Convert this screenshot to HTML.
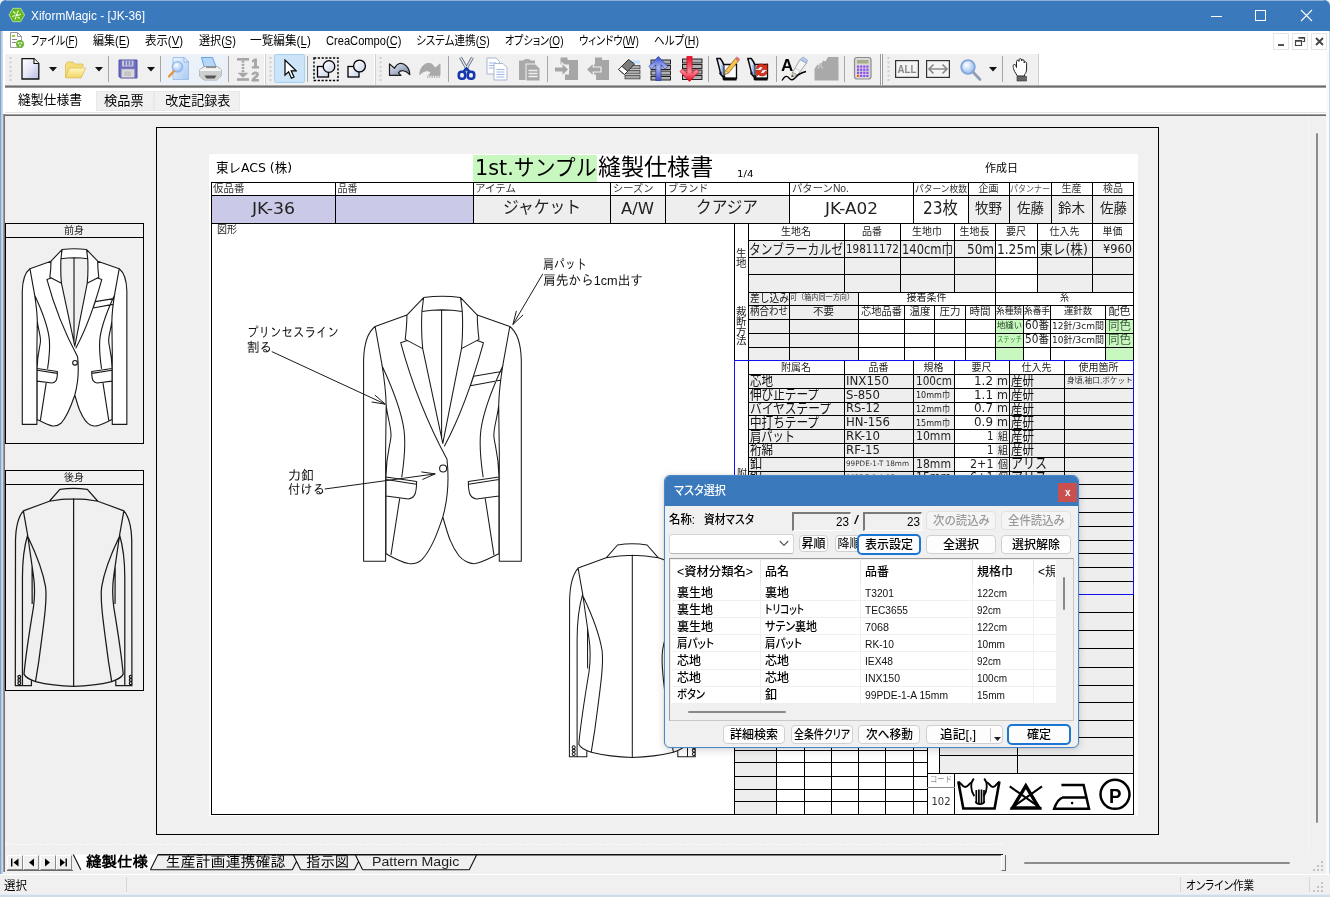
<!DOCTYPE html>
<html lang="ja"><head><meta charset="utf-8"><title>XiformMagic - [JK-36]</title>
<style>

html,body{margin:0;padding:0;}
body{width:1330px;height:897px;overflow:hidden;background:#fff;font-family:"Liberation Sans","Noto Sans CJK JP",sans-serif;font-size:12px;color:#000;}
#root{will-change:transform;position:relative;width:1330px;height:897px;overflow:hidden;background:#f0f0f0;}
#root div,#root span.t,#root svg{position:absolute;box-sizing:border-box;}
span.t{white-space:nowrap;transform-origin:0 50%;}
.btn{background:#fdfdfd;border:1px solid #d0d0d0;border-radius:4px;}
.btnf{background:#fdfdfd;border:2px solid #1a76d2;border-radius:5px;}
.btnd{background:#f5f5f5;border:1px solid #e2e2e2;border-radius:4px;}

</style></head><body>
<div id="root">
<div style="left:0;top:0;width:1330px;height:31px;background:#3a79bb;border-radius:6px 6px 0 0"></div>
<div style="left:6px;top:0px;width:1318px;height:1px;background:#8db1dc"></div>
<svg style="left:8px;top:7px" width="18" height="16" viewBox="8 7 18 16">
<polygon points="9,15 12.900,8.300 20.700,8.300 24.600,15 20.700,21.700 12.900,21.700" fill="#63b81e" stroke="#d8efc0" stroke-width="0.700"/>
<g stroke="#e6f5c8" stroke-width="1.300" fill="none"><path d="M13 11.500l2.500 2M18.500 10.500l-1.500 3M21 14l-3 1.500M20 18.500l-2.500-1.500M15 19.500l1-3M12 16.500l3-1"/></g>
<circle cx="16.800" cy="15" r="1.300" fill="#f2f9d8"/></svg>
<span id="t0" class="t" style="top:8.30px;font-size:12px;line-height:16px;color:#fff;left:31.00px;transform:scaleX(0.9882);">XiformMagic - [JK-36]</span>
<div style="left:1211px;top:16px;width:11px;height:1px;background:#fff"></div>
<div style="left:1255px;top:10px;width:11px;height:11px;border:1px solid #fff;"></div>
<svg style="left:1300px;top:9px" width="13" height="13" viewBox="0 0 13 13"><path d="M1 1L12 12M12 1L1 12" stroke="#fff" stroke-width="1.1" fill="none"/></svg>
<div style="left:0px;top:31px;width:1330px;height:21px;background:#fff;"></div>
<svg style="left:9px;top:31px" width="16" height="18" viewBox="0 0 16 18">
<path d="M1.5 1.5h7l4 4v11h-11z" fill="#fff" stroke="#9a9a9a" stroke-width="1"/><path d="M8.5 1.5v4h4" fill="none" stroke="#9a9a9a"/>
<rect x="3" y="4" width="3" height="2" fill="#9c3"/><rect x="3" y="8" width="5" height="1" fill="#888"/><rect x="3" y="11" width="4" height="1" fill="#888"/>
<circle cx="11" cy="13" r="4" fill="#6fb43c"/><circle cx="9.6" cy="12" r="1" fill="#dff0c8"/><circle cx="12.4" cy="12" r="1" fill="#dff0c8"/><circle cx="11" cy="14.6" r="1" fill="#dff0c8"/></svg>
<span id="t1" class="t" style="top:32.80px;font-size:12px;line-height:16px;font-feature-settings:'palt';left:31.30px;transform:scaleX(0.8226);">ファイル(F)</span>
<span id="t2" class="t" style="top:32.80px;font-size:12px;line-height:16px;font-feature-settings:'palt';left:93.40px;transform:scaleX(0.9200);">編集(E)</span>
<span id="t3" class="t" style="top:32.80px;font-size:12px;line-height:16px;font-feature-settings:'palt';left:145.20px;transform:scaleX(0.9525);">表示(V)</span>
<span id="t4" class="t" style="top:32.80px;font-size:12px;line-height:16px;font-feature-settings:'palt';left:198.50px;transform:scaleX(0.9225);">選択(S)</span>
<span id="t5" class="t" style="top:32.80px;font-size:12px;line-height:16px;font-feature-settings:'palt';left:250.40px;transform:scaleX(0.9701);">一覧編集(L)</span>
<span id="t6" class="t" style="top:32.80px;font-size:12px;line-height:16px;font-feature-settings:'palt';left:326.00px;transform:scaleX(0.9268);">CreaCompo(C)</span>
<span id="t7" class="t" style="top:32.80px;font-size:12px;line-height:16px;font-feature-settings:'palt';left:416.40px;transform:scaleX(0.8819);">システム連携(S)</span>
<span id="t8" class="t" style="top:32.80px;font-size:12px;line-height:16px;font-feature-settings:'palt';left:505.30px;transform:scaleX(0.8346);">オプション(O)</span>
<span id="t9" class="t" style="top:32.80px;font-size:12px;line-height:16px;font-feature-settings:'palt';left:579.10px;transform:scaleX(0.8512);">ウィンドウ(W)</span>
<span id="t10" class="t" style="top:32.80px;font-size:12px;line-height:16px;font-feature-settings:'palt';left:654.20px;transform:scaleX(0.8807);">ヘルプ(H)</span>
<div style="left:68px;top:47px;width:6px;height:1px;background:#000"></div>
<div style="left:120px;top:47px;width:6px;height:1px;background:#000"></div>
<div style="left:172px;top:47px;width:7px;height:1px;background:#000"></div>
<div style="left:224px;top:47px;width:7px;height:1px;background:#000"></div>
<div style="left:301px;top:47px;width:5px;height:1px;background:#000"></div>
<div style="left:389px;top:47px;width:7px;height:1px;background:#000"></div>
<div style="left:478px;top:47px;width:7px;height:1px;background:#000"></div>
<div style="left:550px;top:47px;width:9px;height:1px;background:#000"></div>
<div style="left:624px;top:47px;width:10px;height:1px;background:#000"></div>
<div style="left:686px;top:47px;width:8px;height:1px;background:#000"></div>
<div style="left:1273px;top:33px;width:16px;height:17px;background:#fff;border:1px solid #e5e5e5;"></div>
<div style="left:1292px;top:33px;width:16px;height:17px;background:#fff;border:1px solid #e5e5e5;"></div>
<div style="left:1311px;top:33px;width:16px;height:17px;background:#fff;border:1px solid #e5e5e5;"></div>
<div style="left:1278px;top:44px;width:6px;height:2px;background:#555"></div>
<svg style="left:1294px;top:36px" width="12" height="11" viewBox="0 0 12 11"><path d="M4.5 1.5h6v4h-2M1.5 4.5h6v5h-6z" fill="none" stroke="#444" stroke-width="1.2"/><path d="M1.5 5h6M4.5 2h6" stroke="#444" stroke-width="1.6"/></svg>
<svg style="left:1315px;top:37px" width="9" height="9" viewBox="0 0 9 9"><path d="M1 1L8 8M8 1L1 8" stroke="#444" stroke-width="1.8" fill="none"/></svg>
<div style="left:0px;top:52px;width:1330px;height:36px;background:#fff;"></div>
<div style="left:5px;top:54px;width:1034px;height:31px;background:#f0f0f0;"></div>
<div style="left:1038px;top:54px;width:1px;height:31px;background:#d0d0d0"></div>
<div style="left:5px;top:85px;width:1321px;height:1px;background:#a8a8a8"></div>
<div style="left:5px;top:86px;width:1321px;height:1px;background:#6e6e6e"></div>
<div style="left:5px;top:87px;width:1321px;height:1px;background:#9a9a9a"></div>
<div style="left:0px;top:88px;width:1330px;height:26px;background:#fff;"></div>
<div style="left:96px;top:91px;width:58px;height:20px;background:#f0f0f0;border:1px solid #e8e8e8;"></div>
<div style="left:154px;top:91px;width:86px;height:20px;background:#f0f0f0;border:1px solid #e8e8e8;"></div>
<span id="t11" class="t" style="top:91.00px;font-size:13px;line-height:17px;left:18.00px;transform:scaleX(0.9844);">縫製仕様書</span>
<span id="t12" class="t" style="top:92.00px;font-size:13px;line-height:17px;left:104.40px;transform:scaleX(1.0150);">検品票</span>
<span id="t13" class="t" style="top:92.00px;font-size:13px;line-height:17px;left:165.20px;">改定記録表</span>
<div style="left:5px;top:112px;width:1321px;height:1px;background:#e3e3e3"></div>
<div style="left:5px;top:114px;width:1321px;height:1px;background:#a0a0a0"></div>
<div style="left:5px;top:115px;width:1321px;height:1px;background:#696969"></div>
<div style="left:0px;top:31px;width:1px;height:866px;background:#7fa6d3"></div>
<div style="left:1px;top:31px;width:1px;height:866px;background:#b7cde6"></div>
<div style="left:3px;top:114px;width:1px;height:758px;background:#9a9a9a"></div>
<div style="left:4px;top:114px;width:1px;height:758px;background:#767676"></div>
<div style="left:2px;top:31px;width:1px;height:866px;background:#c9d8ea"></div>
<div style="left:1326px;top:52px;width:3px;height:823px;background:#fafafa"></div>
<div style="left:1329px;top:31px;width:1px;height:866px;background:#c9d8ea"></div>
<div style="left:0px;top:875px;width:1330px;height:22px;background:#f0f0f0;"></div>
<div style="left:0px;top:874px;width:1330px;height:1px;background:#fff"></div>
<div style="left:0px;top:894px;width:1330px;height:1px;background:#e4ebf4"></div>
<div style="left:0px;top:895px;width:1330px;height:2px;background:#cfdcec"></div>
<span id="t14" class="t" style="top:877.80px;font-size:12px;line-height:16px;left:4.00px;transform:scaleX(0.9577);">選択</span>
<div style="left:126px;top:877px;width:1px;height:15px;background:#d7d7d7"></div>
<div style="left:1180px;top:877px;width:1px;height:15px;background:#d7d7d7"></div>
<div style="left:1309px;top:877px;width:1px;height:15px;background:#d7d7d7"></div>
<span id="t15" class="t" style="top:877.80px;font-size:12px;line-height:16px;font-feature-settings:'palt';left:1186.00px;transform:scaleX(0.8794);">オンライン作業</span>
<svg width="0" height="0" style="left:0;top:0"><defs>
<linearGradient id="gLav" x1="0" y1="0" x2="1" y2="1"><stop offset="0" stop-color="#ffffff"/><stop offset="0.5" stop-color="#e6e6f7"/><stop offset="1" stop-color="#b9b9e0"/></linearGradient>
<linearGradient id="gFol" x1="0" y1="0" x2="0" y2="1"><stop offset="0" stop-color="#fff8c4"/><stop offset="1" stop-color="#f2d462"/></linearGradient>
<radialGradient id="gLens" cx="0.4" cy="0.35" r="0.7"><stop offset="0" stop-color="#ffffff"/><stop offset="1" stop-color="#8fb8ee"/></radialGradient>
<linearGradient id="gUp" x1="0" y1="0" x2="0" y2="1"><stop offset="0" stop-color="#3048d0"/><stop offset="0.450" stop-color="#a8b4f0"/><stop offset="1" stop-color="#4a50c8"/></linearGradient>
<linearGradient id="gDn" x1="0" y1="0" x2="0" y2="1"><stop offset="0" stop-color="#f00828"/><stop offset="0.600" stop-color="#f88a98"/><stop offset="1" stop-color="#e80018"/></linearGradient>
<linearGradient id="gBall" x1="0" y1="0" x2="1" y2="1"><stop offset="0" stop-color="#ffffff"/><stop offset="1" stop-color="#c9d3ea"/></linearGradient>
</defs></svg>
<svg style="left:9px;top:56px" width="3" height="28" viewBox="0 0 3 28"><g fill="#cdcdcd"><rect x="0.5" y="1.0" width="2" height="2"/><rect x="0.5" y="5.4" width="2" height="2"/><rect x="0.5" y="9.8" width="2" height="2"/><rect x="0.5" y="14.2" width="2" height="2"/><rect x="0.5" y="18.6" width="2" height="2"/><rect x="0.5" y="23.0" width="2" height="2"/></g></svg>
<svg style="left:21px;top:57px" width="19" height="24" viewBox="0 0 19 24"><path d="M1 1.700h12l4.800 4.800v15.500H1z" fill="url(#gLav)" stroke="#111" stroke-width="1.300"/><path d="M13 1.700v4.800h4.800" fill="#fff" stroke="#111" stroke-width="1.100"/></svg>
<svg style="left:48.5px;top:67px" width="8" height="5" viewBox="0 0 8 5"><path d="M0 0h8l-4 4.5z" fill="#111"/></svg>
<svg style="left:64px;top:60px" width="23" height="20" viewBox="0 0 23 20"><path d="M1.5 17.5V4.5l2-2.5h5.5l1.5 2h8.5v3" fill="#f6dc78" stroke="#dcbc52" stroke-width="0.8"/><path d="M1.5 17.8l3.8-9.8h16.2l-4.3 9.8z" fill="url(#gFol)" stroke="#dcbc52" stroke-width="0.8"/></svg>
<svg style="left:94.5px;top:67px" width="8" height="5" viewBox="0 0 8 5"><path d="M0 0h8l-4 4.5z" fill="#111"/></svg>
<div style="left:108px;top:56px;width:1px;height:26px;background:#a6a6a6"></div>
<svg style="left:118px;top:59px" width="20" height="20" viewBox="0 0 20 20"><path d="M1 1h18v18H2.5L1 17.5z" fill="#6c6cc4" stroke="#5050a8" stroke-width="1"/><rect x="4" y="1.5" width="11.5" height="6" fill="#c9c9d6"/><rect x="6.2" y="1.5" width="1.4" height="5" fill="#6c6cc4"/><rect x="9.2" y="1.5" width="1.4" height="5" fill="#6c6cc4"/><rect x="12.2" y="1.5" width="1.4" height="5" fill="#6c6cc4"/><rect x="3.5" y="10" width="13" height="8.5" fill="#d9d9d9" stroke="#9a9ab0" stroke-width="0.6"/><rect x="6" y="12.5" width="7" height="4.5" fill="#c4c4c4"/></svg>
<svg style="left:146.5px;top:67px" width="8" height="5" viewBox="0 0 8 5"><path d="M0 0h8l-4 4.5z" fill="#111"/></svg>
<div style="left:160px;top:56px;width:1px;height:26px;background:#a6a6a6"></div>
<div style="left:163px;top:55px;width:63px;height:29px;background:#eaf1f9;"></div>
<svg style="left:166px;top:56px" width="24" height="25" viewBox="0 0 24 25"><defs><linearGradient id="gPg" x1="0" y1="0" x2="1" y2="1"><stop offset="0" stop-color="#eef5fe"/><stop offset="1" stop-color="#a9c9f2"/></linearGradient></defs><path d="M7 1.500h11l4.500 4.500v17.500H7z" fill="url(#gPg)" stroke="#9dbde8" stroke-width="0.900"/><path d="M18 1.500V6h4.500z" fill="#f4f9ff" stroke="#7fa6de" stroke-width="0.800"/><circle cx="11.500" cy="10.800" r="5.200" fill="url(#gLens)" stroke="#8db6ea" stroke-width="1.300"/><path d="M7.800 15.200L3 20.500" stroke="#e8923e" stroke-width="2.300" stroke-linecap="round"/></svg>
<svg style="left:198px;top:56px" width="25" height="26" viewBox="0 0 25 26"><path d="M6.500 12L3.500 1.500h11L18.500 12z" fill="#b4d6f8" stroke="#5a9ade" stroke-width="0.900"/><path d="M1.500 14l4.500-3.500h13.500l4 3.500v5.500l-5 4.500H6l-4.500-4z" fill="#ededed" stroke="#9a9a9a" stroke-width="0.800"/><path d="M1.500 14.500h22v4l-5 5H6l-4.500-4.500z" fill="#cfcfcf"/><path d="M2 14.200h21" stroke="#fdfdfd" stroke-width="1.200"/><path d="M6.500 19.500h12l-2 3H8.500z" fill="#555"/><path d="M8 11.200h10" stroke="#777" stroke-width="1.200"/></svg>
<div style="left:228px;top:56px;width:1px;height:26px;background:#a6a6a6"></div>
<svg style="left:236px;top:57px" width="24" height="25" viewBox="0 0 24 25"><g fill="#a6a6a6"><rect x="1" y="1" width="12" height="2.600"/><rect x="5.700" y="3.600" width="2.600" height="2"/><rect x="5.700" y="6.800" width="2.600" height="2"/><rect x="5.700" y="10" width="2.600" height="2"/><rect x="5.700" y="13.200" width="2.600" height="2"/><path d="M1.500 15.800h11l-5.500 5z"/><rect x="1" y="21.200" width="12" height="2.600"/></g><text x="15.500" y="10.500" style="font:bold 13.500px 'Liberation Sans',sans-serif" fill="#a6a6a6" stroke="#a6a6a6" stroke-width="0.900">1</text><text x="15.500" y="23.800" style="font:bold 13.500px 'Liberation Sans',sans-serif" fill="#a6a6a6" stroke="#a6a6a6" stroke-width="0.900">2</text></svg>
<div style="left:264px;top:54px;width:1px;height:31px;background:#fff"></div>
<div style="left:265px;top:54px;width:1px;height:31px;background:#cfcfcf"></div>
<svg style="left:269px;top:56px" width="3" height="28" viewBox="0 0 3 28"><g fill="#cdcdcd"><rect x="0.5" y="1.0" width="2" height="2"/><rect x="0.5" y="5.4" width="2" height="2"/><rect x="0.5" y="9.8" width="2" height="2"/><rect x="0.5" y="14.2" width="2" height="2"/><rect x="0.5" y="18.6" width="2" height="2"/><rect x="0.5" y="23.0" width="2" height="2"/></g></svg>
<div style="left:274px;top:54px;width:31px;height:29px;background:#cce4f7;border:1px solid #a6d2f5;border-radius:2px;"></div>
<svg style="left:284px;top:59px" width="13" height="21" viewBox="0 0 13 21"><path d="M1 1v15.2l3.6-3.4 2.8 6.4 2.6-1.2-2.8-6.2h5z" fill="#fff" stroke="#000" stroke-width="1.2" stroke-linejoin="miter"/></svg>
<div style="left:307px;top:56px;width:1px;height:26px;background:#a6a6a6"></div>
<svg style="left:313px;top:57px" width="26" height="25" viewBox="0 0 26 25"><rect x="1" y="1" width="24" height="22.5" fill="none" stroke="#000" stroke-width="1.4" stroke-dasharray="2.2 1.6"/><rect x="4.5" y="9.5" width="11" height="10.5" fill="url(#gBall)" stroke="#000" stroke-width="1.3"/><circle cx="16" cy="9.5" r="5.8" fill="url(#gBall)" stroke="#000" stroke-width="1.3"/></svg>
<svg style="left:347px;top:59px" width="20" height="20" viewBox="0 0 20 20"><rect x="1" y="7.5" width="11" height="10.5" fill="url(#gBall)" stroke="#000" stroke-width="1.3"/><circle cx="12.5" cy="7" r="5.9" fill="url(#gBall)" stroke="#000" stroke-width="1.3"/></svg>
<div style="left:374px;top:54px;width:1px;height:31px;background:#fff"></div>
<div style="left:375px;top:54px;width:1px;height:31px;background:#cfcfcf"></div>
<svg style="left:379px;top:56px" width="3" height="28" viewBox="0 0 3 28"><g fill="#cdcdcd"><rect x="0.5" y="1.0" width="2" height="2"/><rect x="0.5" y="5.4" width="2" height="2"/><rect x="0.5" y="9.8" width="2" height="2"/><rect x="0.5" y="14.2" width="2" height="2"/><rect x="0.5" y="18.6" width="2" height="2"/><rect x="0.5" y="23.0" width="2" height="2"/></g></svg>
<svg style="left:388px;top:61px" width="23" height="17" viewBox="0 0 23 17"><defs><linearGradient id="gUn" x1="0" y1="0" x2="1" y2="1"><stop offset="0" stop-color="#e8eef8"/><stop offset="1" stop-color="#6f7f9c"/></linearGradient></defs><path d="M1.500 2.900V14.300H13L10.500 11.800C12.500 9 16.500 8.500 21.800 13.500C21.500 6 16 1.500 11.500 2.500C9.500 3 8 4.200 6.500 7.300z" fill="url(#gUn)" stroke="#1a1a1a" stroke-width="1.200" stroke-linejoin="round"/></svg>
<svg style="left:418px;top:61px" width="24" height="17" viewBox="0 0 24 17"><path d="M22 2.900V14.300H10.500L13 11.800C11 9 7 8.500 1.700 13.500C2 6 7.500 1.500 12 2.500C14 3 15.500 4.200 17 7.300z" fill="#a9a9a9" stroke="#a9a9a9" stroke-width="1" stroke-linejoin="round"/><path d="M9 16h13" stroke="#a9a9a9" stroke-width="1.400" stroke-dasharray="1.300 1"/></svg>
<div style="left:448px;top:56px;width:1px;height:26px;background:#a6a6a6"></div>
<svg style="left:457px;top:56px" width="19" height="25" viewBox="0 0 19 25"><path d="M3.500 1.500L11.200 15M15.500 1.500L7.800 15" stroke="#5d6676" stroke-width="3" fill="none"/><path d="M3.500 1.500L10.500 13.800M15.500 1.500L8.500 13.800" stroke="#dfe5ef" stroke-width="1.500" fill="none"/><rect x="1.800" y="15.800" width="6.400" height="7" rx="2.800" fill="none" stroke="#1437b0" stroke-width="2.600"/><rect x="10.800" y="15.800" width="6.400" height="7" rx="2.800" fill="none" stroke="#1437b0" stroke-width="2.600"/><path d="M6.500 15.500l3-3 3 3" stroke="#1437b0" stroke-width="2.400" fill="none"/></svg>
<svg style="left:486px;top:57px" width="23" height="24" viewBox="0 0 23 24"><path d="M1 1h9l3.500 3.500V17H1z" fill="#fff" stroke="#a9b7d1" stroke-width="1"/><g stroke="#9bb6ea" stroke-width="1.100"><path d="M3 6h7M3 8.500h8M3 11h8"/></g><path d="M8 6.500h9l4 4V23H8z" fill="#fff" stroke="#a9b7d1" stroke-width="1"/><g stroke="#9bb6ea" stroke-width="1.200"><path d="M10.500 12.500h8M10.500 15h8M10.500 17.500h8M10.500 20h8"/></g></svg>
<svg style="left:518px;top:57px" width="23" height="24" viewBox="0 0 23 24"><path d="M1 3.500h4.500c0-2 7-2 7 0H17v3h-9.500V23H1z" fill="#a9a9a9"/><path d="M8.500 7.500h9l4 4V23.500h-13z" fill="#a9a9a9"/><g stroke="#f0f0f0" stroke-width="1.400"><path d="M10.500 13.500h9M10.500 16.500h9M10.500 19.500h9"/></g></svg>
<div style="left:547px;top:56px;width:1px;height:26px;background:#a6a6a6"></div>
<svg style="left:554px;top:57px" width="24" height="23" viewBox="0 0 24 23"><path d="M6.500 0.500h7v2.500h10.500v20H11v-5.500h4v-10h-8.500z" fill="#a6a6a6"/><path d="M0.300 10h7.700V5.800l7 6.700-7 6.700V15H0.300z" fill="#a6a6a6" stroke="#f0f0f0" stroke-width="1.200"/></svg>
<svg style="left:585px;top:57px" width="24" height="23" viewBox="0 0 24 23"><path d="M10 0.500h7v2.500h7v20H11v-5.500h-2.500v-10h1.500z" fill="#a6a6a6"/><path d="M16 10H8.300V5.800L1 12.500l7.300 6.700V15H16z" fill="#a6a6a6" stroke="#f0f0f0" stroke-width="1.200"/></svg>
<svg style="left:617px;top:58px" width="24" height="23" viewBox="0 0 24 23"><g fill="#a8a8a8" stroke="#333" stroke-width="0.700"><rect x="8" y="7.500" width="15" height="3.400"/><rect x="8" y="12.500" width="15" height="3.400"/><rect x="8" y="17.500" width="15" height="3.400"/></g><rect x="12" y="2.500" width="11" height="3" fill="#bfe0fb"/><path d="M1.500 11.500L11.500 1.500l6 4.500-10 10.500z" fill="#7c7c7c" stroke="#222" stroke-width="0.900"/><path d="M1.500 11.500l3.200-3.200 6 5-3.200 3.200z" fill="#fff" stroke="#222" stroke-width="0.900"/></svg>
<svg style="left:648px;top:56px" width="24" height="25" viewBox="0 0 24 25"><g fill="#b0b0b0" stroke="#111" stroke-width="0.900"><rect x="3" y="4" width="19.500" height="4"/><rect x="3" y="9.500" width="19.500" height="4"/><rect x="3" y="15" width="19.500" height="4"/><rect x="3" y="20.500" width="19.500" height="3.500"/></g><path transform="translate(-1.600 0)" d="M12 0.500L21.500 10.500L18.800 13L14.600 8.800V24.500H9.400V8.800L5.200 13L2.500 10.500z" fill="url(#gUp)" stroke="#2b3fb8" stroke-width="0.700"/></svg>
<svg style="left:679px;top:56px" width="24" height="26" viewBox="0 0 24 26"><g fill="#b0b0b0" stroke="#111" stroke-width="0.900"><rect x="3.500" y="3" width="19.500" height="4"/><rect x="3.500" y="8.500" width="19.500" height="4"/><rect x="3.500" y="14" width="19.500" height="4"/><rect x="3.500" y="19.500" width="19.500" height="4"/></g><path transform="translate(-2 0)" d="M12.500 25.500L3 15.500L5.700 13L9.900 17.200V0.500H15.100V17.200L19.300 13L22 15.500z" fill="url(#gDn)" stroke="#d40018" stroke-width="0.700"/></svg>
<div style="left:708px;top:56px;width:1px;height:26px;background:#a6a6a6"></div>
<svg style="left:715px;top:56px" width="25" height="25" viewBox="0 0 25 25"><path d="M1.800 2.500h3.500c1.500 2 3 4 3.500 6.500v11l-3.500-3.500C4.500 12 3 7 1.800 2.500z" fill="#dbe6f8" stroke="#0a0a0a" stroke-width="1.500" stroke-linejoin="round"/><path d="M8.800 8.500h12.700v14H9z" fill="#fdfdfd" stroke="#0a0a0a" stroke-width="1.300"/><path d="M5 16.500l4 4.500v2h12.500" stroke="#0a0a0a" stroke-width="2.800" fill="none" stroke-linejoin="round"/><path d="M6.500 9v9l2 2V9.500z" fill="#8fb0e8"/><path d="M10.500 14.500L20.500 2.500l3 2.300L13.500 17l-4 1.500z" fill="#f7c64a" stroke="#8a5a14" stroke-width="0.800"/><path d="M20.500 2.500l3 2.300 1.300-1.600-3-2.300z" fill="#f07a86" stroke="#b04050" stroke-width="0.500"/><path d="M10.500 14.500l-1 4 4-1.500z" fill="#f3e3c3" stroke="#8a5a14" stroke-width="0.500"/><path d="M9.500 18.500l1.200-0.500-0.800-0.800z" fill="#222"/></svg>
<svg style="left:746px;top:56px" width="24" height="25" viewBox="0 0 24 25"><path d="M1.800 2.500h3.500c1.500 2 3 4 3.500 6.500v11l-3.500-3.500C4.500 12 3 7 1.800 2.500z" fill="#dbe6f8" stroke="#0a0a0a" stroke-width="1.500" stroke-linejoin="round"/><path d="M8.800 8.500h12.700v14H9z" fill="#fdfdfd" stroke="#0a0a0a" stroke-width="1.300"/><path d="M5 16.500l4 4.500v2h12.500" stroke="#0a0a0a" stroke-width="2.800" fill="none" stroke-linejoin="round"/><path d="M6.500 9v9l2 2V9.500z" fill="#8fb0e8"/><path d="M10 12.500C10.500 8 16 6.500 19 9.500L21 7.500L21.500 14L15 13.500L17 11.500C15.500 10 13 10.500 12.500 12.500Z" fill="#e03018" stroke="#8a1404" stroke-width="0.500"/><path d="M21.500 15.500C21 20 15.500 21.500 12.500 18.500L10.500 20.500L10 14L16.500 14.500L14.500 16.500C16 18 18.500 17.500 19 15.500Z" fill="#e03018" stroke="#8a1404" stroke-width="0.500"/></svg>
<div style="left:776px;top:56px;width:1px;height:26px;background:#a6a6a6"></div>
<svg style="left:781px;top:56px" width="27" height="26" viewBox="0 0 27 26"><text x="0" y="14.500" style="font:bold 17px 'Liberation Sans',sans-serif" fill="#000">A</text><path d="M11.500 16.500L19 3.500l6.500 3.500L16.500 19z" fill="#f4f4f4" stroke="#8a8a8a" stroke-width="0.800"/><path d="M14 12l6.500 3.500" stroke="#c8c8c8" stroke-width="0.800"/><path d="M19 3.500l6.500 3.500 1-3-4.500-3z" fill="#b4cdee" stroke="#8a9ab8" stroke-width="0.600"/><path d="M11.500 16.500l-1 4.500 6-2z" fill="#e8d8c0" stroke="#777" stroke-width="0.500"/><path d="M10.500 21l0.500-2.200 1.800 1.400z" fill="#333"/><path d="M1 24.500c3-5 5-5 7-2.500s4 2.500 7-1 6-4.500 10-5.500" fill="none" stroke="#000" stroke-width="1.300"/></svg>
<svg style="left:814px;top:56px" width="25" height="25" viewBox="0 0 25 25"><path d="M0.500 24.500V13l3-4.500 2 1 4-5 2 1 2.500-4.500H24.500v23.500z" fill="#a9a9a9"/><text x="3" y="13" font-size="9" font-weight="bold" fill="#c6c6c6" font-family="Liberation Sans, sans-serif">A</text></svg>
<div style="left:844px;top:56px;width:1px;height:26px;background:#a6a6a6"></div>
<svg style="left:853px;top:56px" width="20" height="25" viewBox="0 0 20 25"><rect x="1.500" y="1.500" width="16.500" height="21.500" rx="2.500" fill="#d9d9d9" stroke="#8c8c8c" stroke-width="1.200"/><rect x="4" y="4" width="11.500" height="3.500" fill="#a9ad86"/><g fill="#8a4cf0"><rect x="4.0" y="9.5" width="2.200" height="2.200"/><rect x="4.0" y="12.6" width="2.200" height="2.200"/><rect x="4.0" y="15.7" width="2.200" height="2.200"/><rect x="7.1" y="9.5" width="2.200" height="2.200"/><rect x="7.1" y="12.6" width="2.200" height="2.200"/><rect x="7.1" y="15.7" width="2.200" height="2.200"/><rect x="7.1" y="18.8" width="2.200" height="2.200"/><rect x="10.2" y="9.5" width="2.200" height="2.200"/><rect x="10.2" y="12.6" width="2.200" height="2.200"/><rect x="10.2" y="15.7" width="2.200" height="2.200"/><rect x="10.2" y="18.8" width="2.200" height="2.200"/><rect x="13.3" y="9.5" width="2.200" height="2.200"/><rect x="13.3" y="12.6" width="2.200" height="2.200"/><rect x="13.3" y="15.7" width="2.200" height="2.200"/><rect x="13.3" y="18.8" width="2.200" height="2.200"/></g><rect x="4" y="18.800" width="2.200" height="2.200" fill="#f05a1a"/></svg>
<div style="left:880px;top:54px;width:1px;height:31px;background:#9a9a9a"></div>
<div style="left:882px;top:54px;width:1px;height:31px;background:#9a9a9a"></div>
<div style="left:881px;top:54px;width:1px;height:31px;background:#fff"></div>
<svg style="left:887px;top:56px" width="3" height="28" viewBox="0 0 3 28"><g fill="#cdcdcd"><rect x="0.5" y="1.0" width="2" height="2"/><rect x="0.5" y="5.4" width="2" height="2"/><rect x="0.5" y="9.8" width="2" height="2"/><rect x="0.5" y="14.2" width="2" height="2"/><rect x="0.5" y="18.6" width="2" height="2"/><rect x="0.5" y="23.0" width="2" height="2"/></g></svg>
<svg style="left:895px;top:60px" width="24" height="18" viewBox="0 0 24 18"><rect x="0.600" y="0.600" width="22.800" height="16.800" fill="#f4f4f4" stroke="#333" stroke-width="1.200"/><text x="12" y="13.200" text-anchor="middle" font-size="11.500" font-weight="bold" fill="#8a8a8a" font-family="Liberation Sans, sans-serif" textLength="19" lengthAdjust="spacingAndGlyphs">ALL</text></svg>
<svg style="left:926px;top:60px" width="24" height="18" viewBox="0 0 24 18"><rect x="0.600" y="0.600" width="22.800" height="16.800" fill="#f4f4f4" stroke="#333" stroke-width="1.200"/><path d="M3 9h18M7.500 4.500L3 9l4.500 4.500M16.500 4.500L21 9l-4.500 4.500" fill="none" stroke="#8a8a8a" stroke-width="1.700"/></svg>
<svg style="left:959px;top:58px" width="23" height="23" viewBox="0 0 23 23"><circle cx="9" cy="9" r="6.800" fill="url(#gLens)" stroke="#7fa3dc" stroke-width="1.800"/><path d="M14 14l7 7.500" stroke="#8f9db8" stroke-width="2.600" stroke-linecap="round"/></svg>
<svg style="left:988.5px;top:67px" width="8" height="5" viewBox="0 0 8 5"><path d="M0 0h8l-4 4.5z" fill="#111"/></svg>
<div style="left:1002px;top:56px;width:1px;height:26px;background:#a6a6a6"></div>
<svg style="left:1012px;top:57px" width="19" height="25" viewBox="0 0 19 25"><path d="M3.500 16c-2.500-4-3-8-1.500-8.500s2 1 2.500 3V4.500c0-1.800 2.500-1.800 2.500 0V3c0-1.800 2.600-1.800 2.600 0v1c0-1.800 2.600-1.800 2.600 0v2c0-1.600 2.400-1.600 2.400 0.200V12c0 3-1 4-2 5.500v1.500H5.500z" fill="#fff" stroke="#222" stroke-width="1"/><rect x="5" y="19.500" width="9.500" height="4.500" fill="#666" stroke="#333" stroke-width="0.600"/></svg>
<div style="left:5px;top:223px;width:139px;height:221px;background:#f0f0f0;border:1px solid #000;"></div>
<div style="left:5px;top:237px;width:139px;height:1px;background:#000"></div>
<span id="t16" class="t" style="top:224.00px;font-size:10px;line-height:13px;color:#222;left:64.00px;">前身</span>
<svg style="left:6px;top:237px" width="137" height="206" viewBox="6 237 137 206"><g transform="translate(-218.77 52.25) scale(0.663)"><path d="M423.6 297.6L406.9 315.1L375.1 326.5C368 332 364 345 363.6 360L363.6 561.3L385.6 561.3L386 553.8C394 558 401 562 408.5 563.6C412.5 564.2 417.5 563.5 421.9 559.6C432 549 438 531 442.8 517C446 528 449 538 450.3 540.4C453 547 456 552 458.7 555.5C463 561 470 564.2 475.4 563.6C482 562.5 488 559 498.9 553.8L499.3 561.3L521.3 561.3L521.3 360C520.9 345 516.9 332 509.8 326.5L477.3 315.1L460.4 297.6Q442 295 423.6 297.6z" fill="#fff" stroke="none"/><path d="M421.9 311.4Q441.6 308.4 461.3 311.4C461.9 325 461.4 340 460.5 348.6L442.8 443.4L422.7 348.6C421.8 340 421.3 325 421.9 311.4z" fill="#f0f0f0" stroke="none"/><g fill="none" stroke="#1a1a1a" stroke-width="1.7" stroke-linejoin="round" stroke-linecap="round"><path d="M423.6 297.6Q442 295 460.4 297.6M421.9 311.4Q442 308.4 462.3 311.4M441.6 310V438.5M423.6 297.6L421.9 311.4C421.3 325.0 421.8 340.0 422.7 348.6L442.8 443.4M423.6 297.6L406.9 315.1C406.9 325.0 406.0 333.0 405.2 339.4L422.7 348.6M407.2 340.5L400.7 342.7Q417.3 404.3 447 459.3M406.9 315.1L375.1 326.5M375.1 326.5C368.0 332.0 364.0 345.0 363.6 360.0L363.6 561.3L385.6 561.3L385.6 452.0M375.1 326.5L381.8 363.6C384.5 380.0 386.0 395.0 386.2 405.4C387.5 418.0 391.5 428.0 391.0 436.0C390.5 445.0 386.5 452.0 386.0 476.0L386.0 553.8M386.2 405.4L385.6 452.0M381.8 365.3C391.0 385.0 401.0 408.0 404.0 430.0C406.0 445.0 404.0 462.0 401.8 477.0M399.7 498.3L391.0 554.6M386.0 476.9L416.6 481.5C416.6 488.0 416.0 493.0 414.2 495.6Q412.5 498.6 408.5 498.9L386.0 496.1M386.0 479.6L416.4 484.3M460.6 297.6L462.3 311.4C462.9 325.0 462.4 340.0 461.5 348.6L442.8 443.4M460.6 297.6L477.3 315.1C477.3 325.0 478.2 333.0 479.0 339.4L461.5 348.6M477.0 340.5L483.5 342.7Q466 406.3 444.5 446M477.3 315.1L509.8 326.5M509.8 326.5C516.9 332.0 520.9 345.0 521.3 360.0L521.3 561.3L499.3 561.3L499.3 452.0M509.8 326.5L503.1 363.6C500.4 380.0 498.9 395.0 498.7 405.4C497.4 418.0 493.4 428.0 493.9 436.0C494.4 445.0 498.4 452.0 498.9 476.0L498.9 553.8M498.7 405.4L499.3 452.0M503.1 365.3C493.9 385.0 483.9 408.0 480.9 430.0C478.9 445.0 480.9 462.0 483.1 477.0M485.2 498.3L493.9 554.6M498.9 476.9L468.3 481.5C468.3 488.0 468.9 493.0 470.7 495.6Q472.4 498.6 476.4 498.9L498.9 496.1M498.9 479.6L468.5 484.3M501.6 371.6L473.7 376.2L470.4 385.7L500.2 380.3M447 459.3C449.6 484 446.2 505 442.8 517C438 531 432 549 421.9 559.6C417.5 563.5 412.5 564.2 408.5 563.6C401 562 394 558 386 553.8M442.8 517C446 528 449 538 450.3 540.4C453 547 456 552 458.7 555.5C463 561 470 564.2 475.4 563.6C482 562.5 488 559 498.9 553.8"/><circle cx="443.1" cy="468.5" r="3.500" fill="#fff"/></g></g></svg>
<div style="left:5px;top:470px;width:139px;height:221px;background:#f0f0f0;border:1px solid #000;"></div>
<div style="left:5px;top:484px;width:139px;height:1px;background:#000"></div>
<span id="t17" class="t" style="top:471.00px;font-size:10px;line-height:13px;color:#222;left:64.00px;">後身</span>
<svg style="left:6px;top:484px" width="137" height="206" viewBox="6 484 137 206"><g transform="translate(-512.53 -15.83) scale(0.927)"><g fill="none" stroke="#1a1a1a" stroke-width="1.35" stroke-linejoin="round" stroke-linecap="round"><path d="M617.5 545Q632.3 542.6 647.1 545M632.3 555V757.4M606.2 557.8Q632.3 552.6 658.4 557.8M617.5 545.0L606.2 557.8L578.1 568.1M578.1 568.1C573.0 574.0 570.0 584.0 569.6 600.0L569.4 756.7L586.8 756.7L586.8 751.5M577.1 756.7L577.1 640.0C577.1 628.0 578.0 610.0 582.7 594.2M578.1 568.1L582.7 594.2L588.8 637.0C590.5 648.0 591.0 657.0 589.0 672.0C586.0 690.0 581.0 720.0 578.8 744.3Q581.0 749.0 591.2 752.3M587.5 628.0L587.6 668.0M583.4 596.9C592.0 615.0 599.0 632.0 602.0 650.0C604.0 665.0 600.0 690.0 594.8 729.9L591.2 752.3M591.2 752.3Q610.0 757.0 632.3 757.4M572.2 747.2a1.5 1.5 0 1 0 3 0a1.5 1.5 0 1 0 -3 0M572.2 750.6a1.5 1.5 0 1 0 3 0a1.5 1.5 0 1 0 -3 0M572.2 754.0a1.5 1.5 0 1 0 3 0a1.5 1.5 0 1 0 -3 0M647.1 545.0L658.4 557.8L686.5 568.1M686.5 568.1C691.6 574.0 694.6 584.0 695.0 600.0L695.2 756.7L677.8 756.7L677.8 751.5M687.5 756.7L687.5 640.0C687.5 628.0 686.6 610.0 681.9 594.2M686.5 568.1L681.9 594.2L675.8 637.0C674.1 648.0 673.6 657.0 675.6 672.0C678.6 690.0 683.6 720.0 685.8 744.3Q683.6 749.0 673.4 752.3M677.1 628.0L677.0 668.0M681.2 596.9C672.6 615.0 665.6 632.0 662.6 650.0C660.6 665.0 664.6 690.0 669.8 729.9L673.4 752.3M673.4 752.3Q654.6 757.0 632.3 757.4M692.4 747.2a1.5 1.5 0 1 0 3 0a1.5 1.5 0 1 0 -3 0M692.4 750.6a1.5 1.5 0 1 0 3 0a1.5 1.5 0 1 0 -3 0M692.4 754.0a1.5 1.5 0 1 0 3 0a1.5 1.5 0 1 0 -3 0"/></g></g></svg>
<div style="left:156px;top:127px;width:1003px;height:708px;background:#f0f0f0;border:1px solid #000;"></div>
<div style="left:209px;top:154px;width:929px;height:662px;background:#fff;"></div>
<span id="t18" class="t" style="top:159.00px;font-size:13px;line-height:17px;font-family:'DejaVu Sans','Noto Sans CJK JP',sans-serif;left:216.00px;transform:scaleX(0.9586);">東レACS (株)</span>
<div style="left:473px;top:155px;width:124px;height:27px;background:#c8f8c0;"></div>
<span id="t19" class="t" style="top:152.50px;font-size:22px;line-height:29px;font-family:'DejaVu Sans','Noto Sans CJK JP',sans-serif;left:474.50px;transform:scaleX(0.9461);">1st.サンプル</span>
<span id="t20" class="t" style="top:152.50px;font-size:22.5px;line-height:29px;left:598.20px;transform:scaleX(1.0239);">縫製仕様書</span>
<span id="t21" class="t" style="top:167.50px;font-size:9px;line-height:12px;font-family:'DejaVu Sans','Noto Sans CJK JP',sans-serif;left:737.00px;transform:scaleX(1.1392);">1/4</span>
<span id="t22" class="t" style="top:160.50px;font-size:11px;line-height:14px;left:985.00px;">作成日</span>
<div style="left:212px;top:196px;width:123px;height:27px;background:#cacae8;"></div>
<div style="left:336px;top:196px;width:137px;height:27px;background:#cacae8;"></div>
<div style="left:474px;top:196px;width:136px;height:27px;background:#eeeeee;"></div>
<div style="left:611px;top:196px;width:54px;height:27px;background:#eeeeee;"></div>
<div style="left:666px;top:196px;width:123px;height:27px;background:#eeeeee;"></div>
<div style="left:969px;top:196px;width:40px;height:27px;background:#eeeeee;"></div>
<div style="left:1010px;top:196px;width:41px;height:27px;background:#eeeeee;"></div>
<div style="left:1052px;top:196px;width:40px;height:27px;background:#eeeeee;"></div>
<div style="left:1093px;top:196px;width:40px;height:27px;background:#eeeeee;"></div>
<div style="left:211px;top:182px;width:923px;height:1px;background:#000"></div>
<div style="left:211px;top:195px;width:923px;height:1px;background:#000"></div>
<div style="left:211px;top:223px;width:923px;height:1px;background:#000"></div>
<div style="left:211px;top:182px;width:1px;height:42px;background:#000"></div>
<div style="left:335px;top:182px;width:1px;height:42px;background:#000"></div>
<div style="left:473px;top:182px;width:1px;height:42px;background:#000"></div>
<div style="left:610px;top:182px;width:1px;height:42px;background:#000"></div>
<div style="left:665px;top:182px;width:1px;height:42px;background:#000"></div>
<div style="left:789px;top:182px;width:1px;height:42px;background:#000"></div>
<div style="left:913px;top:182px;width:1px;height:42px;background:#000"></div>
<div style="left:968px;top:182px;width:1px;height:42px;background:#000"></div>
<div style="left:1009px;top:182px;width:1px;height:42px;background:#000"></div>
<div style="left:1051px;top:182px;width:1px;height:42px;background:#000"></div>
<div style="left:1092px;top:182px;width:1px;height:42px;background:#000"></div>
<div style="left:1133px;top:182px;width:1px;height:42px;background:#000"></div>
<span id="t23" class="t" style="top:182.30px;font-size:10px;line-height:13px;color:#333;left:212.50px;transform:scaleX(1.0500);">仮品番</span>
<span id="t24" class="t" style="top:182.30px;font-size:10px;line-height:13px;color:#333;left:337.50px;">品番</span>
<span id="t25" class="t" style="top:182.30px;font-size:10px;line-height:13px;color:#333;left:474.50px;transform:scaleX(1.0513);">アイテム</span>
<span id="t26" class="t" style="top:182.30px;font-size:10px;line-height:13px;color:#333;left:612.50px;transform:scaleX(1.0253);">シーズン</span>
<span id="t27" class="t" style="top:182.30px;font-size:10px;line-height:13px;color:#333;left:667.50px;transform:scaleX(1.0125);">ブランド</span>
<span id="t28" class="t" style="top:182.30px;font-size:10px;line-height:13px;color:#333;left:791.50px;transform:scaleX(1.0352);">パターンNo.</span>
<span id="t29" class="t" style="top:182.80px;font-size:9.5px;line-height:12px;color:#333;left:914.50px;transform:scaleX(0.9198);">パターン枚数</span>
<span id="t30" class="t" style="top:182.30px;font-size:10px;line-height:13px;color:#333;left:978.50px;">企画</span>
<span id="t31" class="t" style="top:182.80px;font-size:9px;line-height:12px;color:#555;left:1010.00px;transform:scaleX(0.8886);">パタンナー</span>
<span id="t32" class="t" style="top:182.30px;font-size:10px;line-height:13px;color:#333;left:1061.50px;">生産</span>
<span id="t33" class="t" style="top:182.30px;font-size:10px;line-height:13px;color:#333;left:1103.00px;">検品</span>
<span id="t34" class="t" style="top:197.70px;font-size:16px;line-height:21px;font-family:'DejaVu Sans','Noto Sans CJK JP',sans-serif;color:#222;left:251.50px;transform:scaleX(1.0839);">JK-36</span>
<span id="t35" class="t" style="top:197.20px;font-size:17px;line-height:22px;color:#222;left:502.50px;transform:scaleX(0.9268);">ジャケット</span>
<span id="t36" class="t" style="top:197.70px;font-size:16px;line-height:21px;font-family:'DejaVu Sans','Noto Sans CJK JP',sans-serif;color:#222;left:621.00px;transform:scaleX(1.0262);">A/W</span>
<span id="t37" class="t" style="top:197.20px;font-size:17px;line-height:22px;color:#222;left:696.00px;transform:scaleX(0.9209);">クアジア</span>
<span id="t38" class="t" style="top:197.70px;font-size:16px;line-height:21px;font-family:'DejaVu Sans','Noto Sans CJK JP',sans-serif;color:#222;left:824.50px;transform:scaleX(1.0544);">JK-A02</span>
<span id="t39" class="t" style="top:197.20px;font-size:17px;line-height:22px;font-family:'DejaVu Sans','Noto Sans CJK JP',sans-serif;color:#222;left:923.00px;transform:scaleX(0.9058);">23枚</span>
<span id="t40" class="t" style="top:199.20px;font-size:14px;line-height:18px;color:#222;left:975.00px;transform:scaleX(0.9643);">牧野</span>
<span id="t41" class="t" style="top:199.20px;font-size:14px;line-height:18px;color:#222;left:1016.50px;transform:scaleX(0.9643);">佐藤</span>
<span id="t42" class="t" style="top:199.20px;font-size:14px;line-height:18px;color:#222;left:1058.00px;transform:scaleX(0.9643);">鈴木</span>
<span id="t43" class="t" style="top:199.20px;font-size:14px;line-height:18px;color:#222;left:1099.50px;transform:scaleX(0.9643);">佐藤</span>
<div style="left:211px;top:223px;width:1px;height:592px;background:#000"></div>
<div style="left:211px;top:814px;width:923px;height:1px;background:#000"></div>
<span id="t44" class="t" style="top:223.00px;font-size:10px;line-height:13px;color:#222;left:217.00px;">図形</span>
<div style="left:734px;top:223px;width:1px;height:592px;background:#000"></div>
<div style="left:1133px;top:223px;width:1px;height:592px;background:#000"></div>
<div style="left:749px;top:241px;width:95px;height:51px;background:#eeeeee;"></div>
<div style="left:845px;top:241px;width:55px;height:51px;background:#eeeeee;"></div>
<div style="left:901px;top:241px;width:53px;height:51px;background:#eeeeee;"></div>
<div style="left:955px;top:241px;width:40px;height:51px;background:#eeeeee;"></div>
<div style="left:1038px;top:241px;width:54px;height:51px;background:#eeeeee;"></div>
<div style="left:1093px;top:241px;width:40px;height:51px;background:#eeeeee;"></div>
<div style="left:748px;top:223px;width:386px;height:1px;background:#000"></div>
<div style="left:748px;top:240px;width:386px;height:1px;background:#000"></div>
<div style="left:748px;top:257px;width:386px;height:1px;background:#000"></div>
<div style="left:748px;top:274px;width:386px;height:1px;background:#000"></div>
<div style="left:748px;top:292px;width:386px;height:1px;background:#000"></div>
<div style="left:748px;top:223px;width:1px;height:70px;background:#000"></div>
<div style="left:844px;top:223px;width:1px;height:70px;background:#000"></div>
<div style="left:900px;top:223px;width:1px;height:70px;background:#000"></div>
<div style="left:954px;top:223px;width:1px;height:70px;background:#000"></div>
<div style="left:995px;top:223px;width:1px;height:70px;background:#000"></div>
<div style="left:1037px;top:223px;width:1px;height:70px;background:#000"></div>
<div style="left:1092px;top:223px;width:1px;height:70px;background:#000"></div>
<div style="left:1133px;top:223px;width:1px;height:70px;background:#000"></div>
<span id="t45" class="t" style="top:225.30px;font-size:10px;line-height:13px;color:#222;left:781.00px;">生地名</span>
<span id="t46" class="t" style="top:225.30px;font-size:10px;line-height:13px;color:#222;left:862.00px;">品番</span>
<span id="t47" class="t" style="top:225.30px;font-size:10px;line-height:13px;color:#222;left:912.00px;">生地巾</span>
<span id="t48" class="t" style="top:225.30px;font-size:10px;line-height:13px;color:#222;left:959.50px;">生地長</span>
<span id="t49" class="t" style="top:225.30px;font-size:10px;line-height:13px;color:#222;left:1006.00px;">要尺</span>
<span id="t50" class="t" style="top:225.30px;font-size:10px;line-height:13px;color:#222;left:1049.50px;">仕入先</span>
<span id="t51" class="t" style="top:225.30px;font-size:10px;line-height:13px;color:#222;left:1102.50px;">単価</span>
<span id="t52" class="t" style="top:245.50px;font-size:10.5px;line-height:14px;color:#222;left:736.00px;">生</span>
<span id="t53" class="t" style="top:255.50px;font-size:10.5px;line-height:14px;color:#222;left:736.00px;">地</span>
<span id="t54" class="t" style="top:240.00px;font-size:14px;line-height:18px;color:#222;left:749.00px;transform:scaleX(0.8423);">タンブラーカルゼ</span>
<span id="t55" class="t" style="top:241.50px;font-size:11.5px;line-height:15px;font-family:'DejaVu Sans','Noto Sans CJK JP',sans-serif;color:#222;left:846.00px;transform:scaleX(0.9053);">19811172</span>
<span id="t56" class="t" style="top:240.00px;font-size:14px;line-height:18px;font-family:'DejaVu Sans','Noto Sans CJK JP',sans-serif;color:#222;left:902.00px;transform:scaleX(0.8218);">140cm巾</span>
<span id="t57" class="t" style="top:240.00px;font-size:14px;line-height:18px;font-family:'DejaVu Sans','Noto Sans CJK JP',sans-serif;color:#222;left:967.00px;transform:scaleX(0.8584);">50m</span>
<span id="t58" class="t" style="top:240.00px;font-size:14px;line-height:18px;font-family:'DejaVu Sans','Noto Sans CJK JP',sans-serif;color:#222;left:997.00px;transform:scaleX(0.8703);">1.25m</span>
<span id="t59" class="t" style="top:240.00px;font-size:14px;line-height:18px;font-family:'DejaVu Sans','Noto Sans CJK JP',sans-serif;color:#222;left:1040.00px;transform:scaleX(0.9067);">東レ(株)</span>
<span id="t60" class="t" style="top:241.00px;font-size:12px;line-height:16px;font-family:'DejaVu Sans','Noto Sans CJK JP',sans-serif;color:#222;left:1103.00px;transform:scaleX(0.9494);">¥960</span>
<div style="left:749px;top:320px;width:109px;height:40px;background:#eeeeee;"></div>
<div style="left:790px;top:306px;width:68px;height:13px;background:#eeeeee;"></div>
<div style="left:749px;top:293px;width:109px;height:12px;background:#eeeeee;"></div>
<div style="left:749px;top:306px;width:40px;height:13px;background:#eeeeee;"></div>
<div style="left:996px;top:320px;width:27px;height:40px;background:#c8f8c0;"></div>
<div style="left:1106px;top:320px;width:27px;height:40px;background:#c8f8c0;"></div>
<div style="left:1024px;top:320px;width:26px;height:27px;background:#fff;"></div>
<div style="left:748px;top:292px;width:386px;height:1px;background:#000"></div>
<div style="left:748px;top:305px;width:386px;height:1px;background:#000"></div>
<div style="left:748px;top:319px;width:386px;height:1px;background:#000"></div>
<div style="left:748px;top:333px;width:386px;height:1px;background:#000"></div>
<div style="left:748px;top:347px;width:386px;height:1px;background:#000"></div>
<div style="left:748px;top:360px;width:386px;height:1px;background:#000"></div>
<div style="left:748px;top:305px;width:1px;height:56px;background:#000"></div>
<div style="left:789px;top:305px;width:1px;height:56px;background:#000"></div>
<div style="left:858px;top:305px;width:1px;height:56px;background:#000"></div>
<div style="left:904px;top:305px;width:1px;height:56px;background:#000"></div>
<div style="left:934px;top:305px;width:1px;height:56px;background:#000"></div>
<div style="left:965px;top:305px;width:1px;height:56px;background:#000"></div>
<div style="left:995px;top:305px;width:1px;height:56px;background:#000"></div>
<div style="left:1023px;top:305px;width:1px;height:56px;background:#000"></div>
<div style="left:1050px;top:305px;width:1px;height:56px;background:#000"></div>
<div style="left:1105px;top:305px;width:1px;height:56px;background:#000"></div>
<div style="left:1133px;top:305px;width:1px;height:56px;background:#000"></div>
<div style="left:748px;top:292px;width:1px;height:69px;background:#000"></div>
<div style="left:789px;top:292px;width:1px;height:13px;background:#000"></div>
<div style="left:858px;top:292px;width:1px;height:13px;background:#000"></div>
<div style="left:995px;top:292px;width:1px;height:13px;background:#000"></div>
<span id="t61" class="t" style="top:304.00px;font-size:10.5px;line-height:14px;color:#222;left:736.00px;">裁</span>
<span id="t62" class="t" style="top:313.80px;font-size:10.5px;line-height:14px;color:#222;left:736.00px;">断</span>
<span id="t63" class="t" style="top:323.60px;font-size:10.5px;line-height:14px;color:#222;left:736.00px;">方</span>
<span id="t64" class="t" style="top:333.40px;font-size:10.5px;line-height:14px;color:#222;left:736.00px;">法</span>
<span id="t65" class="t" style="top:291.00px;font-size:11px;line-height:14px;color:#222;left:750.00px;transform:scaleX(0.8864);">差し込み</span>
<span id="t66" class="t" style="top:293.00px;font-size:7.5px;line-height:10px;color:#333;left:790.00px;transform:scaleX(0.9481);">可（箱内同一方向）</span>
<span id="t67" class="t" style="top:291.30px;font-size:10px;line-height:13px;color:#222;left:906.50px;">接着条件</span>
<span id="t68" class="t" style="top:291.30px;font-size:10px;line-height:13px;color:#222;left:1060.00px;transform:scaleX(0.9000);">糸</span>
<span id="t69" class="t" style="top:304.20px;font-size:11px;line-height:14px;color:#222;left:750.00px;transform:scaleX(0.8636);">柄合わせ</span>
<span id="t70" class="t" style="top:304.20px;font-size:10.5px;line-height:14px;color:#222;left:813.00px;">不要</span>
<span id="t71" class="t" style="top:304.20px;font-size:10.5px;line-height:14px;color:#222;left:861.00px;transform:scaleX(0.9762);">芯地品番</span>
<span id="t72" class="t" style="top:304.20px;font-size:10.5px;line-height:14px;color:#222;left:909.50px;">温度</span>
<span id="t73" class="t" style="top:304.20px;font-size:10.5px;line-height:14px;color:#222;left:939.50px;">圧力</span>
<span id="t74" class="t" style="top:304.20px;font-size:10.5px;line-height:14px;color:#222;left:969.50px;">時間</span>
<span id="t75" class="t" style="top:305.20px;font-size:9px;line-height:12px;color:#222;left:996.00px;transform:scaleX(0.9624);">糸種類</span>
<span id="t76" class="t" style="top:305.20px;font-size:9px;line-height:12px;color:#222;left:1023.50px;transform:scaleX(0.9624);">糸番手</span>
<span id="t77" class="t" style="top:305.20px;font-size:9.5px;line-height:12px;color:#222;left:1063.50px;transform:scaleX(0.9819);">運針数</span>
<span id="t78" class="t" style="top:304.20px;font-size:11px;line-height:14px;color:#222;left:1108.50px;">配色</span>
<span id="t79" class="t" style="top:320.00px;font-size:8.5px;line-height:11px;color:#1e3a1e;left:997.00px;transform:scaleX(0.9798);">地縫い</span>
<span id="t80" class="t" style="top:334.50px;font-size:7.5px;line-height:10px;color:#2f8f2f;left:997.00px;transform:scaleX(0.8333);">ステッチ</span>
<span id="t81" class="t" style="top:317.50px;font-size:11.5px;line-height:15px;font-family:'DejaVu Sans','Noto Sans CJK JP',sans-serif;color:#222;left:1025.00px;transform:scaleX(0.9181);">60番</span>
<span id="t82" class="t" style="top:331.50px;font-size:11.5px;line-height:15px;font-family:'DejaVu Sans','Noto Sans CJK JP',sans-serif;color:#222;left:1025.00px;transform:scaleX(0.9181);">50番</span>
<span id="t83" class="t" style="top:320.00px;font-size:9.5px;line-height:12px;font-family:'DejaVu Sans','Noto Sans CJK JP',sans-serif;color:#222;left:1052.00px;transform:scaleX(0.9487);">12針/3cm間</span>
<span id="t84" class="t" style="top:334.00px;font-size:9.5px;line-height:12px;font-family:'DejaVu Sans','Noto Sans CJK JP',sans-serif;color:#222;left:1052.00px;transform:scaleX(0.9487);">10針/3cm間</span>
<span id="t85" class="t" style="top:317.50px;font-size:12px;line-height:16px;color:#3d5c3d;left:1108.00px;transform:scaleX(0.9577);">同色</span>
<span id="t86" class="t" style="top:331.50px;font-size:12px;line-height:16px;color:#3d5c3d;left:1108.00px;transform:scaleX(0.9577);">同色</span>
<div style="left:749px;top:375px;width:95px;height:220px;background:#eeeeee;"></div>
<div style="left:845px;top:375px;width:68px;height:220px;background:#eeeeee;"></div>
<div style="left:914px;top:375px;width:40px;height:220px;background:#eeeeee;"></div>
<div style="left:996px;top:375px;width:13px;height:220px;background:#eeeeee;"></div>
<div style="left:1010px;top:375px;width:54px;height:220px;background:#eeeeee;"></div>
<div style="left:1065px;top:375px;width:68px;height:220px;background:#eeeeee;"></div>
<div style="left:748px;top:374px;width:385px;height:1px;background:#000"></div>
<div style="left:748px;top:388px;width:385px;height:1px;background:#000"></div>
<div style="left:748px;top:402px;width:385px;height:1px;background:#000"></div>
<div style="left:748px;top:415px;width:385px;height:1px;background:#000"></div>
<div style="left:748px;top:429px;width:385px;height:1px;background:#000"></div>
<div style="left:748px;top:443px;width:385px;height:1px;background:#000"></div>
<div style="left:748px;top:457px;width:385px;height:1px;background:#000"></div>
<div style="left:748px;top:471px;width:385px;height:1px;background:#000"></div>
<div style="left:748px;top:484px;width:385px;height:1px;background:#000"></div>
<div style="left:748px;top:498px;width:385px;height:1px;background:#000"></div>
<div style="left:748px;top:512px;width:385px;height:1px;background:#000"></div>
<div style="left:748px;top:526px;width:385px;height:1px;background:#000"></div>
<div style="left:748px;top:540px;width:385px;height:1px;background:#000"></div>
<div style="left:748px;top:553px;width:385px;height:1px;background:#000"></div>
<div style="left:748px;top:567px;width:385px;height:1px;background:#000"></div>
<div style="left:748px;top:581px;width:385px;height:1px;background:#000"></div>
<div style="left:748px;top:361px;width:1px;height:234px;background:#000"></div>
<div style="left:844px;top:361px;width:1px;height:234px;background:#000"></div>
<div style="left:913px;top:361px;width:1px;height:234px;background:#000"></div>
<div style="left:954px;top:361px;width:1px;height:234px;background:#000"></div>
<div style="left:1009px;top:361px;width:1px;height:234px;background:#000"></div>
<div style="left:1064px;top:361px;width:1px;height:234px;background:#000"></div>
<span id="t87" class="t" style="top:360.70px;font-size:10px;line-height:13px;color:#222;left:781.00px;">附属名</span>
<span id="t88" class="t" style="top:360.70px;font-size:10px;line-height:13px;color:#222;left:868.50px;">品番</span>
<span id="t89" class="t" style="top:360.70px;font-size:10px;line-height:13px;color:#222;left:923.50px;">規格</span>
<span id="t90" class="t" style="top:360.70px;font-size:10px;line-height:13px;color:#222;left:971.50px;">要尺</span>
<span id="t91" class="t" style="top:360.70px;font-size:10px;line-height:13px;color:#222;left:1021.50px;">仕入先</span>
<span id="t92" class="t" style="top:360.70px;font-size:10px;line-height:13px;color:#222;left:1078.50px;">使用箇所</span>
<span id="t93" class="t" style="top:375.00px;font-size:14px;line-height:11.6px;color:#111;height:13px;overflow:hidden;left:750.00px;transform:scaleX(0.8214);">芯地</span>
<span id="t94" class="t" style="top:373.80px;font-size:13px;line-height:14px;font-family:'DejaVu Sans','Noto Sans CJK JP',sans-serif;color:#222;left:846.00px;transform:scaleX(0.9095);">INX150</span>
<span id="t95" class="t" style="top:373.80px;font-size:13px;line-height:14px;font-family:'DejaVu Sans','Noto Sans CJK JP',sans-serif;color:#222;left:916.00px;transform:scaleX(0.8067);">100cm</span>
<span id="t96" class="t" style="top:373.80px;font-size:13px;line-height:14px;font-family:'DejaVu Sans','Noto Sans CJK JP',sans-serif;color:#222;left:974.00px;transform:scaleX(0.9184);">1.2</span>
<span id="t97" class="t" style="top:373.80px;font-size:13px;line-height:14px;font-family:'DejaVu Sans','Noto Sans CJK JP',sans-serif;color:#222;left:996.50px;transform:scaleX(0.8681);">m</span>
<span id="t98" class="t" style="top:375.00px;font-size:14px;line-height:11.6px;color:#111;height:13px;overflow:hidden;left:1011.00px;transform:scaleX(0.8214);">産研</span>
<span id="t99" class="t" style="top:376.30px;font-size:7.5px;line-height:10px;color:#333;left:1067.00px;transform:scaleX(1.0285);">身頃,袖口,ポケット</span>
<span id="t100" class="t" style="top:389.00px;font-size:14px;line-height:11.2px;color:#111;height:13px;overflow:hidden;left:750.00px;transform:scaleX(0.8296);">伸び止テープ</span>
<span id="t101" class="t" style="top:387.60px;font-size:13px;line-height:14px;font-family:'DejaVu Sans','Noto Sans CJK JP',sans-serif;color:#222;left:846.00px;transform:scaleX(0.9003);">S-850</span>
<span id="t102" class="t" style="top:389.10px;font-size:9.5px;line-height:12px;font-family:'DejaVu Sans','Noto Sans CJK JP',sans-serif;color:#222;left:916.00px;transform:scaleX(0.8477);">10mm巾</span>
<span id="t103" class="t" style="top:387.60px;font-size:13px;line-height:14px;font-family:'DejaVu Sans','Noto Sans CJK JP',sans-serif;color:#222;left:974.00px;transform:scaleX(0.9184);">1.1</span>
<span id="t104" class="t" style="top:387.60px;font-size:13px;line-height:14px;font-family:'DejaVu Sans','Noto Sans CJK JP',sans-serif;color:#222;left:996.50px;transform:scaleX(0.8681);">m</span>
<span id="t105" class="t" style="top:389.00px;font-size:14px;line-height:11.2px;color:#111;height:13px;overflow:hidden;left:1011.00px;transform:scaleX(0.8214);">産研</span>
<span id="t106" class="t" style="top:403.00px;font-size:14px;line-height:10.8px;color:#111;height:13px;overflow:hidden;left:750.00px;transform:scaleX(0.8372);">バイヤステープ</span>
<span id="t107" class="t" style="top:401.40px;font-size:13px;line-height:14px;font-family:'DejaVu Sans','Noto Sans CJK JP',sans-serif;color:#222;left:846.00px;transform:scaleX(0.8824);">RS-12</span>
<span id="t108" class="t" style="top:402.90px;font-size:9.5px;line-height:12px;font-family:'DejaVu Sans','Noto Sans CJK JP',sans-serif;color:#222;left:916.00px;transform:scaleX(0.8477);">12mm巾</span>
<span id="t109" class="t" style="top:401.40px;font-size:13px;line-height:14px;font-family:'DejaVu Sans','Noto Sans CJK JP',sans-serif;color:#222;left:974.00px;transform:scaleX(0.9184);">0.7</span>
<span id="t110" class="t" style="top:401.40px;font-size:13px;line-height:14px;font-family:'DejaVu Sans','Noto Sans CJK JP',sans-serif;color:#222;left:996.50px;transform:scaleX(0.8681);">m</span>
<span id="t111" class="t" style="top:403.00px;font-size:14px;line-height:10.8px;color:#111;height:13px;overflow:hidden;left:1011.00px;transform:scaleX(0.8214);">産研</span>
<span id="t112" class="t" style="top:416.00px;font-size:14px;line-height:12.4px;color:#111;height:13px;overflow:hidden;left:750.00px;transform:scaleX(0.8296);">中打ちテープ</span>
<span id="t113" class="t" style="top:415.20px;font-size:13px;line-height:14px;font-family:'DejaVu Sans','Noto Sans CJK JP',sans-serif;color:#222;left:846.00px;transform:scaleX(0.8977);">HN-156</span>
<span id="t114" class="t" style="top:416.70px;font-size:9.5px;line-height:12px;font-family:'DejaVu Sans','Noto Sans CJK JP',sans-serif;color:#222;left:916.00px;transform:scaleX(0.8477);">15mm巾</span>
<span id="t115" class="t" style="top:415.20px;font-size:13px;line-height:14px;font-family:'DejaVu Sans','Noto Sans CJK JP',sans-serif;color:#222;left:974.00px;transform:scaleX(0.9184);">0.9</span>
<span id="t116" class="t" style="top:415.20px;font-size:13px;line-height:14px;font-family:'DejaVu Sans','Noto Sans CJK JP',sans-serif;color:#222;left:996.50px;transform:scaleX(0.8681);">m</span>
<span id="t117" class="t" style="top:416.00px;font-size:14px;line-height:12.4px;color:#111;height:13px;overflow:hidden;left:1011.00px;transform:scaleX(0.8214);">産研</span>
<span id="t118" class="t" style="top:430.00px;font-size:14px;line-height:12.0px;color:#111;height:13px;overflow:hidden;left:750.00px;transform:scaleX(0.8036);">肩パット</span>
<span id="t119" class="t" style="top:429.00px;font-size:13px;line-height:14px;font-family:'DejaVu Sans','Noto Sans CJK JP',sans-serif;color:#222;left:846.00px;transform:scaleX(0.9082);">RK-10</span>
<span id="t120" class="t" style="top:429.00px;font-size:13px;line-height:14px;font-family:'DejaVu Sans','Noto Sans CJK JP',sans-serif;color:#222;left:916.00px;transform:scaleX(0.8358);">10mm</span>
<span id="t121" class="t" style="top:429.00px;font-size:13px;line-height:14px;font-family:'DejaVu Sans','Noto Sans CJK JP',sans-serif;color:#222;left:986.50px;transform:scaleX(0.7849);">1</span>
<span id="t122" class="t" style="top:429.00px;font-size:10.5px;line-height:14px;font-family:'DejaVu Sans','Noto Sans CJK JP',sans-serif;color:#222;left:997.50px;transform:scaleX(0.9524);">組</span>
<span id="t123" class="t" style="top:430.00px;font-size:14px;line-height:12.0px;color:#111;height:13px;overflow:hidden;left:1011.00px;transform:scaleX(0.8214);">産研</span>
<span id="t124" class="t" style="top:444.00px;font-size:14px;line-height:11.6px;color:#111;height:13px;overflow:hidden;left:750.00px;transform:scaleX(0.8214);">裄綿</span>
<span id="t125" class="t" style="top:442.80px;font-size:13px;line-height:14px;font-family:'DejaVu Sans','Noto Sans CJK JP',sans-serif;color:#222;left:846.00px;transform:scaleX(0.9007);">RF-15</span>
<span id="t126" class="t" style="top:442.80px;font-size:13px;line-height:14px;font-family:'DejaVu Sans','Noto Sans CJK JP',sans-serif;color:#222;left:986.50px;transform:scaleX(0.7849);">1</span>
<span id="t127" class="t" style="top:442.80px;font-size:10.5px;line-height:14px;font-family:'DejaVu Sans','Noto Sans CJK JP',sans-serif;color:#222;left:997.50px;transform:scaleX(0.9524);">組</span>
<span id="t128" class="t" style="top:444.00px;font-size:14px;line-height:11.6px;color:#111;height:13px;overflow:hidden;left:1011.00px;transform:scaleX(0.8214);">産研</span>
<span id="t129" class="t" style="top:458.00px;font-size:14px;line-height:11.2px;color:#111;height:13px;overflow:hidden;left:750.00px;transform:scaleX(0.8571);">釦</span>
<span id="t130" class="t" style="top:459.10px;font-size:7.5px;line-height:10px;font-family:'DejaVu Sans','Noto Sans CJK JP',sans-serif;color:#333;left:846.00px;transform:scaleX(0.9662);">99PDE-1-T 18mm</span>
<span id="t131" class="t" style="top:456.60px;font-size:13px;line-height:14px;font-family:'DejaVu Sans','Noto Sans CJK JP',sans-serif;color:#222;left:916.00px;transform:scaleX(0.8358);">18mm</span>
<span id="t132" class="t" style="top:456.60px;font-size:13px;line-height:14px;font-family:'DejaVu Sans','Noto Sans CJK JP',sans-serif;color:#222;left:969.50px;transform:scaleX(0.8565);">2+1</span>
<span id="t133" class="t" style="top:456.60px;font-size:10.5px;line-height:14px;font-family:'DejaVu Sans','Noto Sans CJK JP',sans-serif;color:#222;left:997.50px;transform:scaleX(0.9524);">個</span>
<span id="t134" class="t" style="top:458.00px;font-size:14px;line-height:11.2px;color:#111;height:13px;overflow:hidden;left:1011.00px;transform:scaleX(0.8571);">アリス</span>
<span id="t135" class="t" style="top:472.00px;font-size:14px;line-height:10.8px;color:#111;height:13px;overflow:hidden;left:750.00px;transform:scaleX(0.8571);">釦</span>
<span id="t136" class="t" style="top:472.90px;font-size:7.5px;line-height:10px;font-family:'DejaVu Sans','Noto Sans CJK JP',sans-serif;color:#333;left:846.00px;transform:scaleX(0.9505);">99PDE-1-A 15mm</span>
<span id="t137" class="t" style="top:470.40px;font-size:13px;line-height:14px;font-family:'DejaVu Sans','Noto Sans CJK JP',sans-serif;color:#222;left:916.00px;transform:scaleX(0.8358);">15mm</span>
<span id="t138" class="t" style="top:470.40px;font-size:13px;line-height:14px;font-family:'DejaVu Sans','Noto Sans CJK JP',sans-serif;color:#222;left:969.50px;transform:scaleX(0.8565);">6+1</span>
<span id="t139" class="t" style="top:470.40px;font-size:10.5px;line-height:14px;font-family:'DejaVu Sans','Noto Sans CJK JP',sans-serif;color:#222;left:997.50px;transform:scaleX(0.9524);">個</span>
<span id="t140" class="t" style="top:472.00px;font-size:14px;line-height:10.8px;color:#111;height:13px;overflow:hidden;left:1011.00px;transform:scaleX(0.8571);">アリス</span>
<span id="t141" class="t" style="top:466.50px;font-size:10px;line-height:13px;color:#222;left:737.00px;">附</span>
<div style="left:735px;top:360px;width:399px;height:1px;background:#1010f0"></div>
<div style="left:735px;top:594px;width:399px;height:1px;background:#1010f0"></div>
<div style="left:734px;top:360px;width:1px;height:235px;background:#1010f0"></div>
<div style="left:1133px;top:360px;width:1px;height:235px;background:#1010f0"></div>
<div style="left:1065px;top:595px;width:68px;height:178px;background:#eeeeee;"></div>
<div style="left:748px;top:612px;width:385px;height:1px;background:#000"></div>
<div style="left:748px;top:630px;width:385px;height:1px;background:#000"></div>
<div style="left:748px;top:648px;width:385px;height:1px;background:#000"></div>
<div style="left:748px;top:667px;width:385px;height:1px;background:#000"></div>
<div style="left:748px;top:685px;width:385px;height:1px;background:#000"></div>
<div style="left:748px;top:702px;width:385px;height:1px;background:#000"></div>
<div style="left:748px;top:720px;width:385px;height:1px;background:#000"></div>
<div style="left:940px;top:721px;width:193px;height:52px;background:#eeeeee;"></div>
<div style="left:939px;top:737px;width:194px;height:1px;background:#000"></div>
<div style="left:939px;top:755px;width:194px;height:1px;background:#000"></div>
<div style="left:939px;top:773px;width:194px;height:1px;background:#000"></div>
<div style="left:939px;top:737px;width:1px;height:36px;background:#000"></div>
<div style="left:1017px;top:737px;width:1px;height:36px;background:#000"></div>
<div style="left:735px;top:740px;width:41px;height:74px;background:#eeeeee;"></div>
<div style="left:734px;top:750px;width:194px;height:1px;background:#000"></div>
<div style="left:734px;top:762px;width:194px;height:1px;background:#000"></div>
<div style="left:734px;top:776px;width:194px;height:1px;background:#000"></div>
<div style="left:734px;top:789px;width:194px;height:1px;background:#000"></div>
<div style="left:734px;top:801px;width:194px;height:1px;background:#000"></div>
<div style="left:734px;top:814px;width:194px;height:1px;background:#000"></div>
<div style="left:734px;top:740px;width:1px;height:75px;background:#000"></div>
<div style="left:776px;top:740px;width:1px;height:75px;background:#000"></div>
<div style="left:804px;top:740px;width:1px;height:75px;background:#000"></div>
<div style="left:831px;top:740px;width:1px;height:75px;background:#000"></div>
<div style="left:858px;top:740px;width:1px;height:75px;background:#000"></div>
<div style="left:885px;top:740px;width:1px;height:75px;background:#000"></div>
<div style="left:913px;top:740px;width:1px;height:75px;background:#000"></div>
<div style="left:927px;top:740px;width:1px;height:75px;background:#000"></div>
<div style="left:927px;top:773px;width:207px;height:1px;background:#000"></div>
<div style="left:954px;top:773px;width:1px;height:42px;background:#000"></div>
<div style="left:927px;top:787px;width:28px;height:1px;background:#888"></div>
<span id="t142" class="t" style="top:775.00px;font-size:8px;line-height:10px;color:#888;left:930.00px;transform:scaleX(0.9167);">コード</span>
<span id="t143" class="t" style="top:794.50px;font-size:10px;line-height:13px;font-family:'DejaVu Sans','Noto Sans CJK JP',sans-serif;color:#333;left:931.50px;">102</span>
<svg style="left:956px;top:774px" width="178" height="40" viewBox="956 774 178 40" fill="none" stroke="#000">
<path d="M958.300 781.600L963.300 808.500H994.600L999.400 781.600" stroke-width="2.600" stroke-linejoin="miter"/>
<path d="M958.300 782C961.500 782.500 962 787 965.200 787S969 783 972 782.200M986.500 782.200C989.500 783 990 787 993 787S996.500 782.500 999.500 782" stroke-width="1.900"/>
<path d="M973.800 778.600c-3.500 4-3.500 12 0.500 17.500M984.200 778.600c3.500 4 3.500 12-0.500 17.500" stroke-width="1.800"/>
<path d="M976.300 790v13M978.900 789.500v14.500M981.500 789.500v14.500M984 790v13" stroke-width="1.700"/>
<path d="M975.500 801.500c1.500 3.500 7.500 3.500 9 0" stroke-width="1.800"/>
<path d="M1025.800 785.800L1012.600 808H1039z" stroke-width="3.400" stroke-linejoin="miter"/>
<path d="M1009.700 786.400L1041.400 808.600M1042 786.400L1010.700 808.600" stroke-width="2"/>
<path d="M1061.400 784.900H1083.600L1089 808.700H1054.200C1056.500 802 1059 798.500 1063 797.400H1086" stroke-width="2.500" stroke-linejoin="miter"/>
<circle cx="1072.100" cy="803.100" r="1.300" fill="#000" stroke="none"/>
<circle cx="1115" cy="794.300" r="14.500" stroke-width="2.500"/>
</svg>
<span id="t144" class="t" style="top:781.70px;font-size:21px;line-height:27px;font-weight:bold;left:1109.35px;transform:scaleX(0.8919);">P</span>
<svg style="left:212px;top:224px" width="523" height="590" viewBox="212 224 523 590"><g fill="none" stroke="#1a1a1a" stroke-width="1.05" stroke-linejoin="round" stroke-linecap="round"><path d="M423.6 297.6Q442 295 460.4 297.6M421.9 311.4Q442 308.4 462.3 311.4M441.6 310V438.5M423.6 297.6L421.9 311.4C421.3 325.0 421.8 340.0 422.7 348.6L442.8 443.4M423.6 297.6L406.9 315.1C406.9 325.0 406.0 333.0 405.2 339.4L422.7 348.6M407.2 340.5L400.7 342.7Q417.3 404.3 447 459.3M406.9 315.1L375.1 326.5M375.1 326.5C368.0 332.0 364.0 345.0 363.6 360.0L363.6 561.3L385.6 561.3L385.6 452.0M375.1 326.5L381.8 363.6C384.5 380.0 386.0 395.0 386.2 405.4C387.5 418.0 391.5 428.0 391.0 436.0C390.5 445.0 386.5 452.0 386.0 476.0L386.0 553.8M386.2 405.4L385.6 452.0M381.8 365.3C391.0 385.0 401.0 408.0 404.0 430.0C406.0 445.0 404.0 462.0 401.8 477.0M399.7 498.3L391.0 554.6M386.0 476.9L416.6 481.5C416.6 488.0 416.0 493.0 414.2 495.6Q412.5 498.6 408.5 498.9L386.0 496.1M386.0 479.6L416.4 484.3M460.6 297.6L462.3 311.4C462.9 325.0 462.4 340.0 461.5 348.6L442.8 443.4M460.6 297.6L477.3 315.1C477.3 325.0 478.2 333.0 479.0 339.4L461.5 348.6M477.0 340.5L483.5 342.7Q466 406.3 444.5 446M477.3 315.1L509.8 326.5M509.8 326.5C516.9 332.0 520.9 345.0 521.3 360.0L521.3 561.3L499.3 561.3L499.3 452.0M509.8 326.5L503.1 363.6C500.4 380.0 498.9 395.0 498.7 405.4C497.4 418.0 493.4 428.0 493.9 436.0C494.4 445.0 498.4 452.0 498.9 476.0L498.9 553.8M498.7 405.4L499.3 452.0M503.1 365.3C493.9 385.0 483.9 408.0 480.9 430.0C478.9 445.0 480.9 462.0 483.1 477.0M485.2 498.3L493.9 554.6M498.9 476.9L468.3 481.5C468.3 488.0 468.9 493.0 470.7 495.6Q472.4 498.6 476.4 498.9L498.9 496.1M498.9 479.6L468.5 484.3M501.6 371.6L473.7 376.2L470.4 385.7L500.2 380.3M447 459.3C449.6 484 446.2 505 442.8 517C438 531 432 549 421.9 559.6C417.5 563.5 412.5 564.2 408.5 563.6C401 562 394 558 386 553.8M442.8 517C446 528 449 538 450.3 540.4C453 547 456 552 458.7 555.5C463 561 470 564.2 475.4 563.6C482 562.5 488 559 498.9 553.8"/><circle cx="443.1" cy="468.5" r="3.500" fill="#fff"/></g><g fill="none" stroke="#1a1a1a" stroke-width="1.05" stroke-linejoin="round" stroke-linecap="round"><path d="M617.5 545Q632.3 542.6 647.1 545M632.3 555V757.4M606.2 557.8Q632.3 552.6 658.4 557.8M617.5 545.0L606.2 557.8L578.1 568.1M578.1 568.1C573.0 574.0 570.0 584.0 569.6 600.0L569.4 756.7L586.8 756.7L586.8 751.5M577.1 756.7L577.1 640.0C577.1 628.0 578.0 610.0 582.7 594.2M578.1 568.1L582.7 594.2L588.8 637.0C590.5 648.0 591.0 657.0 589.0 672.0C586.0 690.0 581.0 720.0 578.8 744.3Q581.0 749.0 591.2 752.3M587.5 628.0L587.6 668.0M583.4 596.9C592.0 615.0 599.0 632.0 602.0 650.0C604.0 665.0 600.0 690.0 594.8 729.9L591.2 752.3M591.2 752.3Q610.0 757.0 632.3 757.4M572.2 747.2a1.5 1.5 0 1 0 3 0a1.5 1.5 0 1 0 -3 0M572.2 750.6a1.5 1.5 0 1 0 3 0a1.5 1.5 0 1 0 -3 0M572.2 754.0a1.5 1.5 0 1 0 3 0a1.5 1.5 0 1 0 -3 0M647.1 545.0L658.4 557.8L686.5 568.1M686.5 568.1C691.6 574.0 694.6 584.0 695.0 600.0L695.2 756.7L677.8 756.7L677.8 751.5M687.5 756.7L687.5 640.0C687.5 628.0 686.6 610.0 681.9 594.2M686.5 568.1L681.9 594.2L675.8 637.0C674.1 648.0 673.6 657.0 675.6 672.0C678.6 690.0 683.6 720.0 685.8 744.3Q683.6 749.0 673.4 752.3M677.1 628.0L677.0 668.0M681.2 596.9C672.6 615.0 665.6 632.0 662.6 650.0C660.6 665.0 664.6 690.0 669.8 729.9L673.4 752.3M673.4 752.3Q654.6 757.0 632.3 757.4M692.4 747.2a1.5 1.5 0 1 0 3 0a1.5 1.5 0 1 0 -3 0M692.4 750.6a1.5 1.5 0 1 0 3 0a1.5 1.5 0 1 0 -3 0M692.4 754.0a1.5 1.5 0 1 0 3 0a1.5 1.5 0 1 0 -3 0"/></g><path fill="none" stroke="#1a1a1a" stroke-width="1" d="M542.8 273.8L512.9 324.5M512.9 324.5L523.1 314.9M512.9 324.5L516.4 310.9M271.8 351.6L385.4 404.2M385.4 404.2L374.8 395.0M385.4 404.2L371.6 402.0M324.8 489L435.2 473.9M435.2 473.9L421.3 471.9M435.2 473.9L422.4 479.5"/></svg>
<span id="t145" class="t" style="top:256.70px;font-size:13.5px;line-height:15px;font-family:'Liberation Sans','IPAGothic','Noto Sans CJK JP',sans-serif;color:#111;left:542.80px;transform:scaleX(0.8148);">肩パット</span>
<span id="t146" class="t" style="top:273.00px;font-size:13.5px;line-height:15px;font-family:'Liberation Sans','IPAGothic','Noto Sans CJK JP',sans-serif;color:#111;left:542.80px;transform:scaleX(0.9388);">肩先から1cm出す</span>
<span id="t147" class="t" style="top:324.80px;font-size:13.5px;line-height:15px;font-family:'Liberation Sans','IPAGothic','Noto Sans CJK JP',sans-serif;color:#111;left:246.70px;transform:scaleX(0.8519);">プリンセスライン</span>
<span id="t148" class="t" style="top:339.60px;font-size:13.5px;line-height:15px;font-family:'Liberation Sans','IPAGothic','Noto Sans CJK JP',sans-serif;color:#111;left:246.70px;transform:scaleX(0.9259);">割る</span>
<span id="t149" class="t" style="top:467.80px;font-size:13.5px;line-height:15px;font-family:'Liberation Sans','IPAGothic','Noto Sans CJK JP',sans-serif;color:#111;left:288.00px;transform:scaleX(0.9630);">力釦</span>
<span id="t150" class="t" style="top:481.60px;font-size:13.5px;line-height:15px;font-family:'Liberation Sans','IPAGothic','Noto Sans CJK JP',sans-serif;color:#111;left:288.00px;transform:scaleX(0.9136);">付ける</span>
<div style="left:664px;top:475px;width:415px;height:273px;background:#f0f0f0;border:1px solid #4a87c8;border-radius:6px;box-shadow:0 2px 9px rgba(0,0,0,0.16),0 0 2px rgba(0,0,0,0.12);overflow:hidden"><div style="left:0;top:0;width:415px;height:30px;background:#3a79bb"></div></div>
<span id="t151" class="t" style="top:483.00px;font-size:12px;line-height:16px;color:#fff;font-feature-settings:'palt';font-weight:500;left:673.50px;transform:scaleX(0.9281);">マスタ選択</span>
<div style="left:1058px;top:483px;width:19px;height:19px;background:#c9504e;"></div>
<span id="t152" class="t" style="top:485.00px;font-size:11px;line-height:14px;color:#fff;font-weight:bold;left:1064.75px;transform:scaleX(0.8980);">x</span>
<span id="t153" class="t" style="top:512.00px;font-size:12px;line-height:16px;font-weight:500;left:669.00px;transform:scaleX(0.9509);">名称:</span>
<span id="t154" class="t" style="top:512.00px;font-size:12px;line-height:16px;font-feature-settings:'palt';font-weight:500;left:704.00px;transform:scaleX(0.8924);">資材マスタ</span>
<div style="left:792px;top:512px;width:59px;height:19px;background:#f0f0f0;border-top:2px solid #7a7a7a;border-left:2px solid #7a7a7a;border-right:1px solid #fff;border-bottom:1px solid #fff"></div>
<div style="left:863px;top:512px;width:59px;height:19px;background:#f0f0f0;border-top:2px solid #7a7a7a;border-left:2px solid #7a7a7a;border-right:1px solid #fff;border-bottom:1px solid #fff"></div>
<span id="t155" class="t" style="top:513.50px;font-size:12px;line-height:16px;font-weight:500;left:836.00px;transform:scaleX(0.9731);">23</span>
<span id="t156" class="t" style="top:513.50px;font-size:12px;line-height:16px;font-weight:500;left:907.00px;transform:scaleX(0.9731);">23</span>
<span id="t157" class="t" style="top:510.50px;font-size:13px;line-height:17px;font-weight:500;left:853.50px;transform:scaleX(1.3793);">/</span>
<div class="btnd" style="left:926px;top:511px;width:70px;height:19px"></div>
<span id="t158" class="t" style="top:512.50px;font-size:12px;line-height:16px;color:#9a9a9a;font-weight:500;left:932.50px;transform:scaleX(0.9498);">次の読込み</span>
<div class="btnd" style="left:1001px;top:511px;width:70px;height:19px"></div>
<span id="t159" class="t" style="top:512.50px;font-size:12px;line-height:16px;color:#9a9a9a;font-weight:500;left:1007.50px;transform:scaleX(0.9498);">全件読込み</span>
<div style="left:669px;top:534px;width:125px;height:20px;background:#fff;border:1px solid #d6d6d6;border-bottom-color:#b8b8b8;border-radius:3px"></div>
<svg style="left:779px;top:540px" width="10" height="7" viewBox="0 0 10 7"><path d="M0.800 1l4.200 4.500L9.200 1" fill="none" stroke="#555" stroke-width="1.100"/></svg>
<div class="btn" style="left:799px;top:535px;width:29px;height:17px"></div>
<span id="t160" class="t" style="top:535.50px;font-size:12px;line-height:16px;font-weight:500;left:801.50px;">昇順</span>
<div class="btn" style="left:835px;top:535px;width:24px;height:17px;border-radius:4px 0 0 4px;border-right:none"></div>
<div style="left:836px;top:536px;width:21px;height:16px;overflow:hidden"><span class="t" style="left:1.5px;top:0;font-size:12px;line-height:16px">降順</span></div>
<div class="btnf" style="left:857px;top:534px;width:64px;height:21px"></div>
<span id="t161" class="t" style="top:536.50px;font-size:12px;line-height:16px;font-weight:500;left:865.00px;">表示設定</span>
<div class="btn" style="left:926px;top:535px;width:70px;height:19px"></div>
<span id="t162" class="t" style="top:536.50px;font-size:12px;line-height:16px;font-weight:500;left:943.00px;">全選択</span>
<div class="btn" style="left:1001px;top:535px;width:70px;height:19px"></div>
<span id="t163" class="t" style="top:536.50px;font-size:12px;line-height:16px;font-weight:500;left:1012.00px;">選択解除</span>
<div style="left:669px;top:558px;width:405px;height:163px;background:#f0f0f0;border:1px solid #9a9a9a;border-right-color:#c8c8c8;border-bottom-color:#c8c8c8"></div>
<div style="left:671px;top:560px;width:385px;height:143px;background:#fff;"></div>
<div style="left:760px;top:560px;width:1px;height:25px;background:#e6e6e6"></div>
<div style="left:760px;top:585px;width:1px;height:118px;background:#f0f0f0"></div>
<div style="left:860px;top:560px;width:1px;height:25px;background:#e6e6e6"></div>
<div style="left:860px;top:585px;width:1px;height:118px;background:#f0f0f0"></div>
<div style="left:972px;top:560px;width:1px;height:25px;background:#e6e6e6"></div>
<div style="left:972px;top:585px;width:1px;height:118px;background:#f0f0f0"></div>
<div style="left:1033px;top:560px;width:1px;height:25px;background:#e6e6e6"></div>
<div style="left:1033px;top:585px;width:1px;height:118px;background:#f0f0f0"></div>
<div style="left:672px;top:600px;width:384px;height:1px;background:#efefef"></div>
<div style="left:672px;top:617px;width:384px;height:1px;background:#efefef"></div>
<div style="left:672px;top:634px;width:384px;height:1px;background:#efefef"></div>
<div style="left:672px;top:651px;width:384px;height:1px;background:#efefef"></div>
<div style="left:672px;top:669px;width:384px;height:1px;background:#efefef"></div>
<div style="left:672px;top:686px;width:384px;height:1px;background:#efefef"></div>
<div style="left:672px;top:703px;width:384px;height:1px;background:#efefef"></div>
<span id="t164" class="t" style="top:564.00px;font-size:12px;line-height:16px;font-feature-settings:'palt';font-weight:500;left:677.00px;transform:scaleX(1.0266);">&lt;資材分類名&gt;</span>
<span id="t165" class="t" style="top:564.00px;font-size:12px;line-height:16px;font-weight:500;left:765.00px;">品名</span>
<span id="t166" class="t" style="top:564.00px;font-size:12px;line-height:16px;font-weight:500;left:865.00px;">品番</span>
<span id="t167" class="t" style="top:564.00px;font-size:12px;line-height:16px;font-weight:500;left:977.00px;">規格巾</span>
<div style="left:1036px;top:562px;width:19px;height:20px;overflow:hidden"><span class="t" style="left:2px;top:2px;font-size:12px;line-height:16px">&lt;規格</span></div>
<span id="t168" class="t" style="top:585.00px;font-size:12px;line-height:16px;font-feature-settings:'palt';font-weight:500;left:677.00px;">裏生地</span>
<span id="t169" class="t" style="top:585.00px;font-size:12px;line-height:16px;font-feature-settings:'palt';font-weight:500;left:765.00px;">裏地</span>
<span id="t170" class="t" style="top:586.00px;font-size:11px;line-height:14px;color:#111;font-weight:500;left:865.00px;transform:scaleX(0.9294);">T3201</span>
<span id="t171" class="t" style="top:586.00px;font-size:11px;line-height:14px;color:#111;font-weight:500;left:977.00px;transform:scaleX(0.9082);">122cm</span>
<span id="t172" class="t" style="top:602.00px;font-size:12px;line-height:16px;font-feature-settings:'palt';font-weight:500;left:677.00px;">裏生地</span>
<span id="t173" class="t" style="top:602.00px;font-size:12px;line-height:16px;font-feature-settings:'palt';font-weight:500;left:765.00px;transform:scaleX(0.7934);">トリコット</span>
<span id="t174" class="t" style="top:603.00px;font-size:11px;line-height:14px;color:#111;font-weight:500;left:865.00px;transform:scaleX(0.9250);">TEC3655</span>
<span id="t175" class="t" style="top:603.00px;font-size:11px;line-height:14px;color:#111;font-weight:500;left:977.00px;transform:scaleX(0.8920);">92cm</span>
<span id="t176" class="t" style="top:619.00px;font-size:12px;line-height:16px;font-feature-settings:'palt';font-weight:500;left:677.00px;">裏生地</span>
<span id="t177" class="t" style="top:619.00px;font-size:12px;line-height:16px;font-feature-settings:'palt';font-weight:500;left:765.00px;transform:scaleX(0.9143);">サテン裏地</span>
<span id="t178" class="t" style="top:620.00px;font-size:11px;line-height:14px;color:#111;font-weight:500;left:865.00px;transform:scaleX(0.9802);">7068</span>
<span id="t179" class="t" style="top:620.00px;font-size:11px;line-height:14px;color:#111;font-weight:500;left:977.00px;transform:scaleX(0.9082);">122cm</span>
<span id="t180" class="t" style="top:636.00px;font-size:12px;line-height:16px;font-feature-settings:'palt';font-weight:500;left:677.00px;transform:scaleX(0.8810);">肩パット</span>
<span id="t181" class="t" style="top:636.00px;font-size:12px;line-height:16px;font-feature-settings:'palt';font-weight:500;left:765.00px;transform:scaleX(0.8810);">肩パット</span>
<span id="t182" class="t" style="top:637.00px;font-size:11px;line-height:14px;color:#111;font-weight:500;left:865.00px;transform:scaleX(0.9299);">RK-10</span>
<span id="t183" class="t" style="top:637.00px;font-size:11px;line-height:14px;color:#111;font-weight:500;left:977.00px;transform:scaleX(0.9162);">10mm</span>
<span id="t184" class="t" style="top:653.00px;font-size:12px;line-height:16px;font-feature-settings:'palt';font-weight:500;left:677.00px;">芯地</span>
<span id="t185" class="t" style="top:653.00px;font-size:12px;line-height:16px;font-feature-settings:'palt';font-weight:500;left:765.00px;">芯地</span>
<span id="t186" class="t" style="top:654.00px;font-size:11px;line-height:14px;color:#111;font-weight:500;left:865.00px;transform:scaleX(0.9343);">IEX48</span>
<span id="t187" class="t" style="top:654.00px;font-size:11px;line-height:14px;color:#111;font-weight:500;left:977.00px;transform:scaleX(0.8920);">92cm</span>
<span id="t188" class="t" style="top:670.00px;font-size:12px;line-height:16px;font-feature-settings:'palt';font-weight:500;left:677.00px;">芯地</span>
<span id="t189" class="t" style="top:670.00px;font-size:12px;line-height:16px;font-feature-settings:'palt';font-weight:500;left:765.00px;">芯地</span>
<span id="t190" class="t" style="top:671.00px;font-size:11px;line-height:14px;color:#111;font-weight:500;left:865.00px;transform:scaleX(0.9536);">INX150</span>
<span id="t191" class="t" style="top:671.00px;font-size:11px;line-height:14px;color:#111;font-weight:500;left:977.00px;transform:scaleX(0.9082);">100cm</span>
<span id="t192" class="t" style="top:687.00px;font-size:12px;line-height:16px;font-feature-settings:'palt';font-weight:500;left:677.00px;transform:scaleX(0.8554);">ボタン</span>
<span id="t193" class="t" style="top:687.00px;font-size:12px;line-height:16px;font-feature-settings:'palt';font-weight:500;left:765.00px;">釦</span>
<span id="t194" class="t" style="top:688.00px;font-size:11px;line-height:14px;color:#111;font-weight:500;left:865.00px;transform:scaleX(0.9362);">99PDE-1-A 15mm</span>
<span id="t195" class="t" style="top:688.00px;font-size:11px;line-height:14px;color:#111;font-weight:500;left:977.00px;transform:scaleX(0.9162);">15mm</span>
<div style="left:1063px;top:577px;width:2px;height:33px;background:#8a8a8a;border-radius:1px;"></div>
<div style="left:688px;top:711px;width:98px;height:2px;background:#8a8a8a;border-radius:1px;"></div>
<div class="btn" style="left:723px;top:725px;width:62px;height:19px"></div>
<span id="t196" class="t" style="top:726.50px;font-size:12px;line-height:16px;font-weight:500;left:730.00px;">詳細検索</span>
<div class="btn" style="left:791px;top:725px;width:62px;height:19px"></div>
<span id="t197" class="t" style="top:726.50px;font-size:12px;line-height:16px;font-feature-settings:'palt';font-weight:500;left:794.00px;transform:scaleX(0.8262);">全条件クリア</span>
<div class="btn" style="left:858px;top:725px;width:62px;height:19px"></div>
<span id="t198" class="t" style="top:726.50px;font-size:12px;line-height:16px;font-weight:500;left:865.50px;transform:scaleX(0.9788);">次へ移動</span>
<div class="btn" style="left:926px;top:725px;width:77px;height:19px"></div>
<span id="t199" class="t" style="top:726.50px;font-size:12px;line-height:16px;font-weight:500;left:940.00px;transform:scaleX(1.0583);">追記[,]</span>
<div style="left:990px;top:728px;width:1px;height:14px;background:#c8c8c8"></div>
<svg style="left:994px;top:737px" width="7" height="4" viewBox="0 0 7 4"><path d="M0 0h7l-3.500 4z" fill="#222"/></svg>
<div class="btnf" style="left:1007px;top:724px;width:64px;height:21px"></div>
<span id="t200" class="t" style="top:726.50px;font-size:12px;line-height:16px;font-weight:500;left:1027.00px;">確定</span>
<div style="left:5px;top:844px;width:1000px;height:1px;background:repeating-linear-gradient(90deg,#fafafa 0 3px,#f0f0f0 3px 5px)"></div>
<div style="left:1308px;top:116px;width:1px;height:736px;background:#f6f6f6"></div>
<div style="left:1316px;top:133px;width:2px;height:690px;background:#8c8c8c;border-radius:1px;"></div>
<div style="left:7.0px;top:855px;width:16px;height:15px;background:#f0f0f0;border-top:1px solid #fff;border-left:1px solid #fff;border-right:1px solid #8a8a8a;border-bottom:1px solid #8a8a8a"></div>
<div style="left:23.3px;top:855px;width:16px;height:15px;background:#f0f0f0;border-top:1px solid #fff;border-left:1px solid #fff;border-right:1px solid #8a8a8a;border-bottom:1px solid #8a8a8a"></div>
<div style="left:39.6px;top:855px;width:16px;height:15px;background:#f0f0f0;border-top:1px solid #fff;border-left:1px solid #fff;border-right:1px solid #8a8a8a;border-bottom:1px solid #8a8a8a"></div>
<div style="left:55.9px;top:855px;width:16px;height:15px;background:#f0f0f0;border-top:1px solid #fff;border-left:1px solid #fff;border-right:1px solid #8a8a8a;border-bottom:1px solid #8a8a8a"></div>
<div style="left:7px;top:870px;width:66px;height:1px;background:#6a6a6a"></div>
<svg style="left:7px;top:855px" width="66" height="15" viewBox="0 0 66 15" fill="#000">
<rect x="4" y="3.500" width="1.400" height="8"/><path d="M11.500 3.500v8l-5-4z"/>
<path d="M27 3.500v8l-5-4z"/>
<path d="M38 3.500v8l5-4z"/>
<path d="M53 3.500v8l5-4z"/><rect x="58.500" y="3.500" width="1.400" height="8"/></svg>
<svg style="left:70px;top:852px" width="940" height="20" viewBox="70 852 940 20">
<path d="M73.300 854.600L80.800 869.800H150.400L158 854.600z" fill="#fff" stroke="none"/>
<path d="M158 854.700H1003" stroke="#111" stroke-width="1.500" fill="none"/>
<path d="M73.300 854.600L80.800 869.800M158 854.600L150.400 869.800M150.400 869.700H292.300M293.200 854.600L300.600 869.800M296.500 861.500L292.300 869.800M300.600 869.700H354.400M355.200 854.600L362.600 869.800M358.500 861.500L354.400 869.800M362.600 869.700H469.300M476.800 854.600L469.300 869.800" stroke="#111" stroke-width="1.100" fill="none"/>
</svg>
<span id="t201" class="t" style="top:854.30px;font-size:15px;line-height:16px;font-family:'Liberation Sans','IPAGothic','Noto Sans CJK JP',sans-serif;font-weight:bold;left:85.70px;transform:scaleX(1.0333);">縫製仕様</span>
<span id="t202" class="t" style="top:854.30px;font-size:15px;line-height:16px;font-family:'Liberation Sans','IPAGothic','Noto Sans CJK JP',sans-serif;left:165.40px;">生産計画連携確認</span>
<span id="t203" class="t" style="top:854.30px;font-size:15px;line-height:16px;font-family:'Liberation Sans','IPAGothic','Noto Sans CJK JP',sans-serif;left:306.40px;transform:scaleX(0.9600);">指示図</span>
<span id="t204" class="t" style="top:854.30px;font-size:13px;line-height:16px;font-family:'Liberation Sans','IPAGothic','Noto Sans CJK JP',sans-serif;color:#222;left:372.20px;transform:scaleX(1.0872);">Pattern Magic</span>
<div style="left:1001px;top:855px;width:5px;height:16px;background:#f0f0f0;border-left:1px solid #fff;border-right:1px solid #6a6a6a;border-bottom:1px solid #6a6a6a"></div>
<div style="left:1024px;top:862px;width:266px;height:2px;background:#8c8c8c;border-radius:1px;"></div>
<svg style="left:1312px;top:860px" width="12" height="12" viewBox="0 0 12 12" fill="#c4c4c4"><rect x="9" y="1" width="2" height="2"/><rect x="5" y="5" width="2" height="2"/><rect x="9" y="5" width="2" height="2"/><rect x="1" y="9" width="2" height="2"/><rect x="5" y="9" width="2" height="2"/><rect x="9" y="9" width="2" height="2"/></svg>
<svg style="left:1312px;top:881px" width="12" height="12" viewBox="0 0 12 12" fill="#c4c4c4"><rect x="9" y="1" width="2" height="2"/><rect x="5" y="5" width="2" height="2"/><rect x="9" y="5" width="2" height="2"/><rect x="1" y="9" width="2" height="2"/><rect x="5" y="9" width="2" height="2"/><rect x="9" y="9" width="2" height="2"/></svg>
</div>
</body></html>
